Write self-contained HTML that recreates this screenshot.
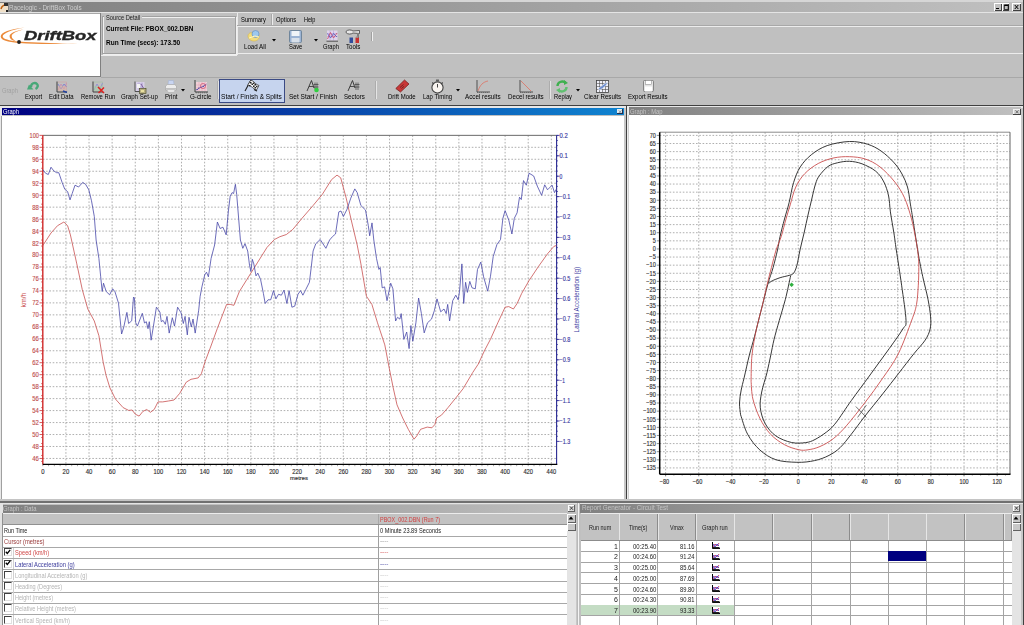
<!DOCTYPE html>
<html><head><meta charset="utf-8"><style>
html,body{margin:0;padding:0;}
body{width:1024px;height:625px;overflow:hidden;position:relative;background:#c0c0c0;font-family:"Liberation Sans", sans-serif;}
#wrap{filter:blur(0.35px);width:1024px;height:625px;position:relative;overflow:hidden;}
svg text{font-family:"Liberation Sans", sans-serif;}
</style></head><body><div id="wrap">
<div style="position:absolute;left:0px;top:0px;width:1024px;height:2px;background:#d6d6d6;"></div><div style="position:absolute;left:0px;top:2px;width:1023px;height:10px;background:linear-gradient(to right,#808080,#c0c0c0);"></div><div style="position:absolute;left:0px;top:12px;width:1023px;height:1px;background:#e4e4e4;"></div><div style="position:absolute;left:1023px;top:0px;width:1px;height:625px;background:#404040;"></div><svg style="position:absolute;left:0;top:3px" width="8" height="9" viewBox="0 0 8 9"><rect x="0" y="0" width="8" height="9" fill="#f0e0c8"/><path d="M1 6 Q2 2 6 2" stroke="#c06010" stroke-width="1.5" fill="none"/><rect x="4" y="0" width="4" height="3" fill="#303030"/><rect x="6" y="7" width="2" height="2" fill="#202020"/></svg><div style="position:absolute;left:994px;top:3px;width:7.5px;height:8px;background:#c0c0c0;box-shadow:inset 1px 1px #fff, inset -1px -1px #404040"></div><div style="position:absolute;left:1001.5px;top:3px;width:7.5px;height:8px;background:#c0c0c0;box-shadow:inset 1px 1px #fff, inset -1px -1px #404040"></div><div style="position:absolute;left:1012px;top:3px;width:8.5px;height:8px;background:#c0c0c0;box-shadow:inset 1px 1px #fff, inset -1px -1px #404040"></div><div style="position:absolute;left:996px;top:8px;width:3px;height:1.2px;background:#000"></div><svg style="position:absolute;left:1001.5px;top:3px" width="8" height="8"><path d="M2.3 2.2 H6.2 V6.6 H2.3 Z" fill="none" stroke="#000" stroke-width="0.8"/><path d="M2.3 2.3 H6.2" stroke="#000" stroke-width="1.4"/></svg><svg style="position:absolute;left:1012px;top:3px" width="9" height="8"><path d="M2.8 2 L6.3 6 M6.3 2 L2.8 6" stroke="#000" stroke-width="1"/></svg><div style="position:absolute;left:0px;top:13px;width:100px;height:1px;background:#a8a8a8;"></div><div style="position:absolute;left:0px;top:14px;width:100px;height:62px;background:#fff;"></div><div style="position:absolute;left:100px;top:13px;width:1px;height:64px;background:#808080;"></div><div style="position:absolute;left:0px;top:76px;width:101px;height:1px;background:#808080;"></div><svg style="position:absolute;left:0;top:14px" width="100" height="62" viewBox="0 14 100 62">
<path d="M24.5,27.5 C10,29 0.7,32.5 0.7,36.5 C0.7,40.2 8,42.2 18,42.9 L18,41.5 C9.5,40.7 2.7,38.9 2.7,36.5 C2.7,33.6 11,29.7 24.5,27.5 Z" fill="#eb8a3a"/>
<path d="M19,43 C40,44.4 62,44.1 78,43.1 C62,43.3 40,43.1 19,41.5 Z" fill="#eb8a3a"/>
<path d="M23.5,29.6 C15,31 9.6,33.5 9.6,36.2 C9.6,38.9 12.5,40.7 17.2,41.7 C14,40.3 11.7,38.6 11.7,36.2 C11.7,33.8 16,31.3 23.5,29.6 Z" fill="#eb8a3a"/>
<circle cx="19" cy="42" r="1.9" fill="#222"/>
</svg><div style="position:absolute;left:102px;top:16px;width:132px;height:36px;border:1px solid #a0a0a0;box-shadow:1px 1px #f0f0f0, inset 1px 1px #f0f0f0"></div><div style="position:absolute;left:104px;top:14px;width:38px;height:5px;background:#c0c0c0;"></div><div style="position:absolute;left:101px;top:55px;width:136px;height:1px;background:#ececec;"></div><div style="position:absolute;left:237px;top:13px;width:1px;height:42px;background:#eaeaea;"></div><div style="position:absolute;left:237px;top:26px;width:786px;height:1px;background:#ececec;"></div><div style="position:absolute;left:237px;top:25px;width:786px;height:1px;background:#a8a8a8;"></div><div style="position:absolute;left:271px;top:14px;width:1px;height:11px;background:#a8a8a8;"></div><div style="position:absolute;left:272px;top:14px;width:1px;height:11px;background:#ececec;"></div><div style="position:absolute;left:237px;top:53px;width:786px;height:1px;background:#ececec;"></div><div style="position:absolute;left:371px;top:32px;width:1px;height:9px;background:#a0a0a0;"></div><div style="position:absolute;left:372px;top:32px;width:1px;height:9px;background:#f0f0f0;"></div><svg style="position:absolute;left:271.8px;top:39px" width="5" height="3"><path d="M0 0 L4 0 L2 2.5 Z" fill="#000"/></svg><svg style="position:absolute;left:314.3px;top:39px" width="5" height="3"><path d="M0 0 L4 0 L2 2.5 Z" fill="#000"/></svg><svg style="position:absolute;left:247px;top:29px" width="14" height="14" viewBox="0 0 14 14">
<path d="M1 7 C1 4 4 3 7 4 L12 6 C13 9 11 12 7 12 C4 12 1 10 1 7Z" fill="#f2dc7c" stroke="#d9b84a" stroke-width="0.6"/>
<circle cx="8.5" cy="5" r="3.5" fill="#9cc8ee" stroke="#5a8ac0" stroke-width="0.6"/>
<path d="M2 9 L8 7 L12 8" stroke="#fff6c0" stroke-width="1" fill="none"/>
</svg><svg style="position:absolute;left:289px;top:30px" width="13" height="13" viewBox="0 0 13 13">
<rect x="0.5" y="0.5" width="12" height="12" rx="1" fill="#9cb4d4" stroke="#607890" stroke-width="0.8"/>
<rect x="2.5" y="1" width="8" height="5" fill="#f0f4f8"/>
<rect x="2.5" y="8" width="8" height="4.5" fill="#d8e0ea"/>
</svg><svg style="position:absolute;left:326px;top:30px" width="12" height="12" viewBox="0 0 12 12">
<rect x="1" y="0.5" width="10.5" height="10" fill="#e0d4ec"/>
<path d="M1 3.5 H11.5 M1 6.5 H11.5 M4 0.5 V10.5 M7.5 0.5 V10.5" stroke="#b0a0d8" stroke-width="0.6"/>
<path d="M1.5 9 L4.5 2.5 L7.5 8 L11 3" stroke="#d05070" stroke-width="0.9" fill="none"/>
<path d="M1.5 3.5 L4.5 8 L7.5 3.5 L11 7" stroke="#6060c0" stroke-width="0.9" fill="none"/>
<path d="M0.5 11.2 H12" stroke="#505050" stroke-width="1"/>
</svg><svg style="position:absolute;left:345px;top:29px" width="16" height="14" viewBox="0 0 16 14">
<path d="M1 2.5 C2.5 0.5 6 0.5 8 2 L14.5 1.5 L14.5 4.5 L8 4 C6 5.5 2.5 5.5 1 3.5 Z" fill="#e8e8e8" stroke="#404040" stroke-width="0.8"/>
<rect x="12" y="4" width="2" height="5" fill="#808080"/>
<rect x="4.5" y="8.5" width="3.5" height="5.5" fill="#304c9c"/>
<rect x="10.5" y="8.5" width="3.5" height="5.5" fill="#c83030"/>
<rect x="11.5" y="7" width="1.5" height="2" fill="#909090"/>
</svg><div style="position:absolute;left:101px;top:76.8px;width:922px;height:1px;background:#a8a8a8;"></div><div style="position:absolute;left:0px;top:105px;width:1024px;height:1px;background:#404040;"></div><div style="position:absolute;left:0px;top:106px;width:1023px;height:2px;background:#e8e8e8;"></div><div style="position:absolute;left:218.5px;top:78.5px;width:64.8px;height:22.2px;background:#c6d4ee;border:1px solid #3a4a84"></div><div style="position:absolute;left:216.6px;top:81px;width:1px;height:18px;background:#acacac;"></div><div style="position:absolute;left:217.6px;top:81px;width:1px;height:18px;background:#e4e4e4;"></div><div style="position:absolute;left:375.2px;top:81px;width:1px;height:18px;background:#acacac;"></div><div style="position:absolute;left:376.2px;top:81px;width:1px;height:18px;background:#e4e4e4;"></div><div style="position:absolute;left:548.9px;top:81px;width:1px;height:18px;background:#acacac;"></div><div style="position:absolute;left:549.9px;top:81px;width:1px;height:18px;background:#e4e4e4;"></div><svg style="position:absolute;left:181px;top:89.2px" width="5" height="3"><path d="M0 0 L4 0 L2 2.5 Z" fill="#000"/></svg><svg style="position:absolute;left:456px;top:88.5px" width="5" height="3"><path d="M0 0 L4 0 L2 2.5 Z" fill="#000"/></svg><svg style="position:absolute;left:575.6px;top:88.5px" width="5" height="3"><path d="M0 0 L4 0 L2 2.5 Z" fill="#000"/></svg><svg style="position:absolute;left:26px;top:81px" width="13" height="10" viewBox="0 0 13 10"><path d="M5 6 C5 2 9 1 11 3 C12.5 4.5 11.5 7 9.5 8" stroke="#48a878" stroke-width="2.4" fill="none"/><path d="M1 8.5 L7.5 8.5 L3 3.5 Z" fill="#48a878"/></svg><svg style="position:absolute;left:56px;top:81px" width="12" height="12" viewBox="0 0 12 12"><path d="M1.5 1 H10.5 V10.5" stroke="#d0a0a0" stroke-width="0.6" fill="none"/><path d="M2 9 L5 3 L8 8 L10.5 2" stroke="#c890b0" stroke-width="0.9" fill="none"/><path d="M2 3 L5 8 L8 3 L10.5 6" stroke="#8080d0" stroke-width="0.9" fill="none"/><rect x="2" y="5" width="8" height="5" fill="#e0b0a0" opacity="0.5"/><path d="M1 0.5 V11 H11" stroke="#404040" stroke-width="1" fill="none"/><path d="M7 10 L11 11.5" stroke="#2040a0" stroke-width="1.4"/></svg><svg style="position:absolute;left:92px;top:81px" width="13" height="13" viewBox="0 0 13 13"><path d="M1.5 1 H10.5 V10.5" stroke="#a0c0a0" stroke-width="0.6" fill="none"/><path d="M2 9 L5 3 L8 8 L10.5 2" stroke="#9090d0" stroke-width="0.9" fill="none"/><rect x="2" y="5" width="8" height="5" fill="#a0d0a0" opacity="0.5"/><path d="M1 0.5 V11 H11" stroke="#404040" stroke-width="1" fill="none"/><path d="M6 6 L12 12 M12 6.5 L6.5 12" stroke="#e02020" stroke-width="1.5"/></svg><svg style="position:absolute;left:134px;top:81px" width="13" height="13" viewBox="0 0 13 13"><rect x="1.5" y="1" width="9" height="9" fill="#d8d0e8"/><path d="M3 3 h6 M3 6 h6 M5 1.5 v8 M8 1.5 v8" stroke="#b0a0d0" stroke-width="0.7"/><path d="M1 0.5 V10.5 H6" stroke="#505050" stroke-width="1" fill="none"/><rect x="3" y="3" width="3" height="4" fill="#f4f4f4"/><path d="M7 3 L9.5 7" stroke="#8060a0" stroke-width="1"/><rect x="5.5" y="7.5" width="6.5" height="5" fill="#b8b080" stroke="#505030" stroke-width="0.7"/><rect x="7" y="9" width="3" height="2" fill="#e8e0a0"/></svg><svg style="position:absolute;left:165px;top:80px" width="12" height="13" viewBox="0 0 12 13"><path d="M3.5 0.5 L8.5 0.5 L9 5 L3 5 Z" fill="#c8d4f0" stroke="#a0b0d0" stroke-width="0.5"/><path d="M0.5 6 L2.5 4.5 H9.5 L11.5 6 V10 H0.5 Z" fill="#ececec" stroke="#a0a0a0" stroke-width="0.6"/><rect x="1" y="8" width="10" height="1.5" fill="#c0c0c0"/><path d="M2 10 H10 L9 12 H3 Z" fill="#f8f8f8" stroke="#b0b0b0" stroke-width="0.5"/></svg><svg style="position:absolute;left:194px;top:80px" width="14" height="14" viewBox="0 0 14 14"><rect x="2" y="2" width="11" height="9" fill="#f0d0d8"/><path d="M2 5 H13 M2 8 H13 M5 2 V11 M8 2 V11 M11 2 V11" stroke="#e0a0b0" stroke-width="0.5"/><path d="M1 0 V12 H14" stroke="#404040" stroke-width="1" fill="none"/><path d="M2.5 10 L5 8 L8 7 L10 6 L12.5 4" stroke="#3030a0" stroke-width="1.1" stroke-dasharray="1.5 0.8" fill="none"/><circle cx="9" cy="6" r="2.6" fill="none" stroke="#d04060" stroke-width="0.6"/><path d="M2 12.8 H13" stroke="#505050" stroke-width="0.6" stroke-dasharray="1 1"/></svg><svg style="position:absolute;left:244px;top:79px" width="16" height="13" viewBox="0 0 16 13"><path d="M1 12 L7 1" stroke="#202020" stroke-width="1.1"/><path d="M6.5 1.5 C8.5 1 10 3 11.5 4.5 C12.5 5.5 14 6 15 6.5 L12.5 11 C11 10.5 9.5 9.5 8.5 8.5 C7 7 5 6.5 3.5 6.5 Z" fill="#f4f4f4" stroke="#202020" stroke-width="0.7"/><path d="M6 3 h1.5 v1.5 h-1.5z M9 3.5 h1.5 v1.5 h-1.5z M7.5 4.5 h1.5 v1.5 h-1.5z M10.5 5 h1.5 v1.5 h-1.5z M5 6 h1.5 v1.2 h-1.5z M9 6.5 h1.5 v1.5 h-1.5z M12 6.8 h1.5 v1.5 h-1.5z M10.5 8 h1.5 v1.5 h-1.5z" fill="#202020"/><path d="M10 10.5 L13 12" stroke="#202020" stroke-width="1.2"/></svg><svg style="position:absolute;left:306px;top:79px" width="14" height="14" viewBox="0 0 14 14"><path d="M1 12 L5.5 1.5 L8 9" stroke="#303030" stroke-width="0.9" fill="none"/><path d="M3 7.5 H7" stroke="#303030" stroke-width="0.8"/><path d="M7.5 5.5 H12.5 M7.5 8 H12.5 M9 3.5 V10 M11 3.5 V10" stroke="#404040" stroke-width="0.7"/><circle cx="10.5" cy="11" r="2.3" fill="#30d040"/></svg><svg style="position:absolute;left:347px;top:79px" width="14" height="13" viewBox="0 0 14 13"><path d="M1 12 L5.5 1.5 L8 9" stroke="#303030" stroke-width="0.9" fill="none"/><path d="M3 7.5 H7" stroke="#303030" stroke-width="0.8"/><path d="M7.5 5.5 H12.5 M7.5 8 H12.5 M9 3.5 V11 M11 3.5 V11" stroke="#404040" stroke-width="0.7"/></svg><svg style="position:absolute;left:395px;top:79px" width="15" height="14" viewBox="0 0 15 14"><path d="M0.8 9.5 L9.5 1 L14 5 L5.5 13 Z" fill="#c83838" stroke="#701818" stroke-width="0.7"/><path d="M5 8.5 L8.5 5.5 M6.5 9.5 L9 7.3" stroke="#602020" stroke-width="0.8"/></svg><svg style="position:absolute;left:430px;top:79px" width="15" height="15" viewBox="0 0 15 15"><circle cx="7.5" cy="8.5" r="5.6" fill="#f8f4f0" stroke="#404040" stroke-width="1.1"/><rect x="6" y="0.5" width="3" height="2" fill="#606060"/><path d="M2.3 3.5 L3.8 5 M12.7 3.5 L11.2 5" stroke="#404040" stroke-width="1.1"/><path d="M7.5 8.5 L7.5 5" stroke="#303030" stroke-width="0.9"/></svg><svg style="position:absolute;left:476px;top:80px" width="14" height="13" viewBox="0 0 14 13"><path d="M1 0 V12 H14" stroke="#505050" stroke-width="1" fill="none"/><path d="M2 11 C4 5 7 2 12 1" stroke="#e07060" stroke-width="0.8" fill="none"/><path d="M1 12.5 H13" stroke="#505050" stroke-width="0.6" stroke-dasharray="1 1"/></svg><svg style="position:absolute;left:519px;top:80px" width="14" height="13" viewBox="0 0 14 13"><path d="M1 0 V12 H14" stroke="#505050" stroke-width="1" fill="none"/><path d="M2 1 L12 11" stroke="#e07060" stroke-width="0.8" fill="none"/><path d="M1 12.5 H13" stroke="#505050" stroke-width="0.6" stroke-dasharray="1 1"/></svg><svg style="position:absolute;left:555px;top:80px" width="14" height="13" viewBox="0 0 14 13"><path d="M2.5 6 C2.5 2 7 0.5 10.5 2.5" stroke="#40b050" stroke-width="2.4" fill="none"/><path d="M9 0 L13 3 L9 5 Z" fill="#40b050"/><path d="M11.5 7 C11.5 11 7 12.5 3.5 10.5" stroke="#60c070" stroke-width="2.4" fill="none"/><path d="M5 13 L1 10 L5 8 Z" fill="#60c070"/></svg><svg style="position:absolute;left:596px;top:80px" width="13" height="13" viewBox="0 0 13 13"><rect x="0.5" y="0.5" width="12" height="12" fill="#f0f0f8" stroke="#404040" stroke-width="0.8"/><path d="M0.5 3.5 H12.5 M0.5 6.5 H12.5 M0.5 9.5 H12.5 M3.5 0.5 V12.5 M6.5 0.5 V12.5 M9.5 0.5 V12.5" stroke="#505050" stroke-width="0.6"/><path d="M2 9 C5 6 9 3 12 2 C11 5 8 8 4 10 Z" fill="#7090d0" stroke="#fff" stroke-width="0.6"/></svg><svg style="position:absolute;left:643px;top:80px" width="11" height="12" viewBox="0 0 11 12"><rect x="0.5" y="0.5" width="10" height="11" rx="1" fill="#e4e4e4" stroke="#707070" stroke-width="0.8"/><rect x="2.5" y="0.5" width="6" height="4" fill="#ffffff" stroke="#808080" stroke-width="0.5"/><rect x="2" y="6.5" width="7" height="5" fill="#fff"/></svg><div style="position:absolute;left:0px;top:108px;width:2px;height:392px;background:#e8e8e8;"></div><div style="position:absolute;left:1px;top:116px;width:1px;height:384px;background:#a0a0a0;"></div><div style="position:absolute;left:2px;top:107.6px;width:622.5px;height:7.9px;background:linear-gradient(to right,#000080,#1084d0);"></div><div style="position:absolute;left:2px;top:115.5px;width:622px;height:384px;background:#fff;"></div><div style="position:absolute;left:624px;top:108px;width:2px;height:392px;background:#c8c8c8;"></div><div style="position:absolute;left:626px;top:106px;width:1px;height:397px;background:#404040;"></div><div style="position:absolute;left:627px;top:106px;width:1.5px;height:397px;background:#ececec;"></div><div style="position:absolute;left:617px;top:108.8px;width:6.2px;height:5.6px;background:#e4eef4;box-shadow:inset -1px -1px #203050"></div><svg style="position:absolute;left:617px;top:108.8px" width="7" height="6"><path d="M1.8 1.4 L4.4 4 M4.4 1.4 L1.8 4" stroke="#707070" stroke-width="0.7"/></svg><div style="position:absolute;left:628.5px;top:107.4px;width:392.5px;height:7.8px;background:linear-gradient(to right,#808080,#c0c0c0);"></div><div style="position:absolute;left:628.5px;top:115px;width:392.5px;height:384.5px;background:#fff;"></div><div style="position:absolute;left:628px;top:115px;width:1px;height:384.5px;background:#d0d0d0;"></div><div style="position:absolute;left:1021px;top:108px;width:2px;height:392px;background:#c8c8c8;"></div><div style="position:absolute;left:1013px;top:109px;width:7.8px;height:5.6px;background:#d4d4d4;box-shadow:inset -1px -1px #404040, inset 1px 1px #f0f0f0"></div><svg style="position:absolute;left:1013px;top:109px" width="8" height="6"><path d="M2.5 1.3 L5.5 4.3 M5.5 1.3 L2.5 4.3" stroke="#505050" stroke-width="0.8"/></svg><div style="position:absolute;left:0px;top:499px;width:1023px;height:2px;background:#c4c4c4;"></div><div style="position:absolute;left:0px;top:501px;width:1023px;height:1.5px;background:#707070;"></div><div style="position:absolute;left:0px;top:502.5px;width:1023px;height:1.5px;background:#e4e4e4;"></div><div style="position:absolute;left:0px;top:504px;width:2.5px;height:121px;background:#e4e4e4;"></div><div style="position:absolute;left:2.2px;top:512.5px;width:0.8px;height:112.5px;background:#909090;"></div><div style="position:absolute;left:2.5px;top:504.5px;width:573.5px;height:8px;background:linear-gradient(to right,#808080,#c0c0c0);"></div><div style="position:absolute;left:568px;top:505px;width:7px;height:6.5px;background:#d8d8d8;box-shadow:inset -1px -1px #606060, inset 1px 1px #fff"></div><svg style="position:absolute;left:568px;top:505px" width="7" height="7"><path d="M2 1.5 L5 4.8 M5 1.5 L2 4.8" stroke="#303030" stroke-width="0.9"/></svg><div style="position:absolute;left:2.5px;top:512.5px;width:573.5px;height:112.5px;background:#c0c0c0;"></div><div style="position:absolute;left:3px;top:514px;width:563.5px;height:10.4px;background:#c2c2c2;"></div><div style="position:absolute;left:3px;top:513.3px;width:563.5px;height:1px;background:#ececec;"></div><div style="position:absolute;left:3px;top:524.4px;width:563.5px;height:0.8px;background:#909090;"></div><div style="position:absolute;left:3px;top:525px;width:563.5px;height:100px;background:#fff;"></div><div style="position:absolute;left:3px;top:536px;width:563.5px;height:1px;background:#a8a8a8;"></div><div style="position:absolute;left:3px;top:547px;width:563.5px;height:1px;background:#a8a8a8;"></div><div style="position:absolute;left:3px;top:558px;width:563.5px;height:1px;background:#a8a8a8;"></div><div style="position:absolute;left:3px;top:569px;width:563.5px;height:1px;background:#a8a8a8;"></div><div style="position:absolute;left:3px;top:581px;width:563.5px;height:1px;background:#a8a8a8;"></div><div style="position:absolute;left:3px;top:592px;width:563.5px;height:1px;background:#a8a8a8;"></div><div style="position:absolute;left:3px;top:603px;width:563.5px;height:1px;background:#a8a8a8;"></div><div style="position:absolute;left:3px;top:614px;width:563.5px;height:1px;background:#a8a8a8;"></div><div style="position:absolute;left:3px;top:625px;width:563.5px;height:1px;background:#a8a8a8;"></div><div style="position:absolute;left:3.9px;top:548.4px;width:6px;height:6px;background:#fff;border-left:1px solid #404040;border-top:1px solid #404040;border-right:1px solid #e0e0e0;border-bottom:1px solid #e0e0e0"></div><svg style="position:absolute;left:4.5px;top:549.1px" width="6" height="6"><path d="M0.8 2.8 L2.3 4.5 L5.2 0.8" stroke="#000" stroke-width="1.3" fill="none"/></svg><div style="position:absolute;left:13px;top:547.6px;width:0.8px;height:10.4px;background:#d0d0d0;"></div><div style="position:absolute;left:3.9px;top:559.6px;width:6px;height:6px;background:#fff;border-left:1px solid #404040;border-top:1px solid #404040;border-right:1px solid #e0e0e0;border-bottom:1px solid #e0e0e0"></div><svg style="position:absolute;left:4.5px;top:560.3px" width="6" height="6"><path d="M0.8 2.8 L2.3 4.5 L5.2 0.8" stroke="#000" stroke-width="1.3" fill="none"/></svg><div style="position:absolute;left:13px;top:558.8000000000001px;width:0.8px;height:10.4px;background:#d0d0d0;"></div><div style="position:absolute;left:3.9px;top:570.8px;width:6px;height:6px;background:#fff;border-left:1px solid #404040;border-top:1px solid #404040;border-right:1px solid #e0e0e0;border-bottom:1px solid #e0e0e0"></div><div style="position:absolute;left:13px;top:570.0px;width:0.8px;height:10.4px;background:#d0d0d0;"></div><div style="position:absolute;left:3.9px;top:582.0px;width:6px;height:6px;background:#fff;border-left:1px solid #404040;border-top:1px solid #404040;border-right:1px solid #e0e0e0;border-bottom:1px solid #e0e0e0"></div><div style="position:absolute;left:13px;top:581.2px;width:0.8px;height:10.4px;background:#d0d0d0;"></div><div style="position:absolute;left:3.9px;top:593.2px;width:6px;height:6px;background:#fff;border-left:1px solid #404040;border-top:1px solid #404040;border-right:1px solid #e0e0e0;border-bottom:1px solid #e0e0e0"></div><div style="position:absolute;left:13px;top:592.4000000000001px;width:0.8px;height:10.4px;background:#d0d0d0;"></div><div style="position:absolute;left:3.9px;top:604.4px;width:6px;height:6px;background:#fff;border-left:1px solid #404040;border-top:1px solid #404040;border-right:1px solid #e0e0e0;border-bottom:1px solid #e0e0e0"></div><div style="position:absolute;left:13px;top:603.6px;width:0.8px;height:10.4px;background:#d0d0d0;"></div><div style="position:absolute;left:3.9px;top:615.6px;width:6px;height:6px;background:#fff;border-left:1px solid #404040;border-top:1px solid #404040;border-right:1px solid #e0e0e0;border-bottom:1px solid #e0e0e0"></div><div style="position:absolute;left:13px;top:614.8000000000001px;width:0.8px;height:10.4px;background:#d0d0d0;"></div><div style="position:absolute;left:378px;top:525.2px;width:0.8px;height:100px;background:#a0a0a0;"></div><div style="position:absolute;left:378px;top:514px;width:0.8px;height:10.4px;background:#a8a8a8;"></div><div style="position:absolute;left:566.5px;top:514px;width:9px;height:111px;background:#e4e4e4;"></div><div style="position:absolute;left:566.5px;top:514px;width:9px;height:8.6px;background:#c8c8c8;box-shadow:inset 1px 1px #fff, inset -1px -1px #606060"></div><svg style="position:absolute;left:568px;top:516px" width="6" height="4"><path d="M0.5 3.5 L3 0.5 L5.5 3.5 Z" fill="#000"/></svg><div style="position:absolute;left:566.5px;top:522.6px;width:9px;height:8px;background:#c8c8c8;box-shadow:inset 1px 1px #fff, inset -1px -1px #606060"></div><div style="position:absolute;left:575.5px;top:504px;width:1.5px;height:121px;background:#c8c8c8;"></div><div style="position:absolute;left:577px;top:503px;width:1px;height:122px;background:#b8b8b8;"></div><div style="position:absolute;left:578px;top:503px;width:1px;height:122px;background:#f4f4f4;"></div><div style="position:absolute;left:579px;top:503px;width:1px;height:122px;background:#c0c0c0;"></div><div style="position:absolute;left:580px;top:504px;width:441px;height:8.5px;background:linear-gradient(to right,#808080,#c0c0c0);"></div><div style="position:absolute;left:580px;top:512.5px;width:441px;height:112.5px;background:#c0c0c0;"></div><div style="position:absolute;left:580.5px;top:514px;width:431.2px;height:25.8px;background:#c2c2c2;"></div><div style="position:absolute;left:580.5px;top:513.3px;width:431.2px;height:1px;background:#ececec;"></div><div style="position:absolute;left:618.6px;top:514px;width:0.8px;height:25.8px;background:#8c8c8c;"></div><div style="position:absolute;left:619.4px;top:514px;width:0.8px;height:25.8px;background:#e6e6e6;"></div><div style="position:absolute;left:656.9000000000001px;top:514px;width:0.8px;height:25.8px;background:#8c8c8c;"></div><div style="position:absolute;left:657.7px;top:514px;width:0.8px;height:25.8px;background:#e6e6e6;"></div><div style="position:absolute;left:695.2px;top:514px;width:0.8px;height:25.8px;background:#8c8c8c;"></div><div style="position:absolute;left:696.0px;top:514px;width:0.8px;height:25.8px;background:#e6e6e6;"></div><div style="position:absolute;left:733.5px;top:514px;width:0.8px;height:25.8px;background:#8c8c8c;"></div><div style="position:absolute;left:734.3px;top:514px;width:0.8px;height:25.8px;background:#e6e6e6;"></div><div style="position:absolute;left:771.7px;top:514px;width:0.8px;height:25.8px;background:#8c8c8c;"></div><div style="position:absolute;left:772.5px;top:514px;width:0.8px;height:25.8px;background:#e6e6e6;"></div><div style="position:absolute;left:810.9000000000001px;top:514px;width:0.8px;height:25.8px;background:#8c8c8c;"></div><div style="position:absolute;left:811.7px;top:514px;width:0.8px;height:25.8px;background:#e6e6e6;"></div><div style="position:absolute;left:849.1px;top:514px;width:0.8px;height:25.8px;background:#8c8c8c;"></div><div style="position:absolute;left:849.9px;top:514px;width:0.8px;height:25.8px;background:#e6e6e6;"></div><div style="position:absolute;left:887.5px;top:514px;width:0.8px;height:25.8px;background:#8c8c8c;"></div><div style="position:absolute;left:888.3px;top:514px;width:0.8px;height:25.8px;background:#e6e6e6;"></div><div style="position:absolute;left:925.6px;top:514px;width:0.8px;height:25.8px;background:#8c8c8c;"></div><div style="position:absolute;left:926.4px;top:514px;width:0.8px;height:25.8px;background:#e6e6e6;"></div><div style="position:absolute;left:964.0px;top:514px;width:0.8px;height:25.8px;background:#8c8c8c;"></div><div style="position:absolute;left:964.8px;top:514px;width:0.8px;height:25.8px;background:#e6e6e6;"></div><div style="position:absolute;left:1002.9000000000001px;top:514px;width:0.8px;height:25.8px;background:#8c8c8c;"></div><div style="position:absolute;left:1003.7px;top:514px;width:0.8px;height:25.8px;background:#e6e6e6;"></div><div style="position:absolute;left:1010.9000000000001px;top:514px;width:0.8px;height:25.8px;background:#8c8c8c;"></div><div style="position:absolute;left:1011.7px;top:514px;width:0.8px;height:25.8px;background:#e6e6e6;"></div><div style="position:absolute;left:580.5px;top:539.8px;width:431.2px;height:0.8px;background:#8c8c8c;"></div><div style="position:absolute;left:580.5px;top:540.6px;width:431.2px;height:85px;background:#fff;"></div><div style="position:absolute;left:580.5px;top:551px;width:431.2px;height:1px;background:#a4a4a4;"></div><div style="position:absolute;left:580.5px;top:562px;width:431.2px;height:1px;background:#a4a4a4;"></div><div style="position:absolute;left:580.5px;top:572px;width:431.2px;height:1px;background:#a4a4a4;"></div><div style="position:absolute;left:580.5px;top:583px;width:431.2px;height:1px;background:#a4a4a4;"></div><div style="position:absolute;left:580.5px;top:594px;width:431.2px;height:1px;background:#a4a4a4;"></div><div style="position:absolute;left:580.5px;top:605px;width:431.2px;height:1px;background:#a4a4a4;"></div><div style="position:absolute;left:580.5px;top:615px;width:431.2px;height:1px;background:#a4a4a4;"></div><div style="position:absolute;left:580.5px;top:626px;width:431.2px;height:1px;background:#a4a4a4;"></div><svg style="position:absolute;left:712px;top:542.1px" width="8" height="7" viewBox="0 0 8 7"><rect x="0" y="0" width="8" height="7" fill="#fff"/><path d="M0.5 0 V6.5 H8" stroke="#000" stroke-width="1" fill="none"/><path d="M1 5 L3 2 L5 4 L7 1" stroke="#c03070" stroke-width="0.9" fill="none"/><path d="M1 2 L3 5 L5 2 L7 4" stroke="#4040c0" stroke-width="0.9" fill="none"/><rect x="0.5" y="5" width="7" height="1.5" fill="#202020"/></svg><svg style="position:absolute;left:712px;top:552.85px" width="8" height="7" viewBox="0 0 8 7"><rect x="0" y="0" width="8" height="7" fill="#fff"/><path d="M0.5 0 V6.5 H8" stroke="#000" stroke-width="1" fill="none"/><path d="M1 5 L3 2 L5 4 L7 1" stroke="#c03070" stroke-width="0.9" fill="none"/><path d="M1 2 L3 5 L5 2 L7 4" stroke="#4040c0" stroke-width="0.9" fill="none"/><rect x="0.5" y="5" width="7" height="1.5" fill="#202020"/></svg><svg style="position:absolute;left:712px;top:563.6px" width="8" height="7" viewBox="0 0 8 7"><rect x="0" y="0" width="8" height="7" fill="#fff"/><path d="M0.5 0 V6.5 H8" stroke="#000" stroke-width="1" fill="none"/><path d="M1 5 L3 2 L5 4 L7 1" stroke="#c03070" stroke-width="0.9" fill="none"/><path d="M1 2 L3 5 L5 2 L7 4" stroke="#4040c0" stroke-width="0.9" fill="none"/><rect x="0.5" y="5" width="7" height="1.5" fill="#202020"/></svg><svg style="position:absolute;left:712px;top:574.35px" width="8" height="7" viewBox="0 0 8 7"><rect x="0" y="0" width="8" height="7" fill="#fff"/><path d="M0.5 0 V6.5 H8" stroke="#000" stroke-width="1" fill="none"/><path d="M1 5 L3 2 L5 4 L7 1" stroke="#c03070" stroke-width="0.9" fill="none"/><path d="M1 2 L3 5 L5 2 L7 4" stroke="#4040c0" stroke-width="0.9" fill="none"/><rect x="0.5" y="5" width="7" height="1.5" fill="#202020"/></svg><svg style="position:absolute;left:712px;top:585.1px" width="8" height="7" viewBox="0 0 8 7"><rect x="0" y="0" width="8" height="7" fill="#fff"/><path d="M0.5 0 V6.5 H8" stroke="#000" stroke-width="1" fill="none"/><path d="M1 5 L3 2 L5 4 L7 1" stroke="#c03070" stroke-width="0.9" fill="none"/><path d="M1 2 L3 5 L5 2 L7 4" stroke="#4040c0" stroke-width="0.9" fill="none"/><rect x="0.5" y="5" width="7" height="1.5" fill="#202020"/></svg><svg style="position:absolute;left:712px;top:595.85px" width="8" height="7" viewBox="0 0 8 7"><rect x="0" y="0" width="8" height="7" fill="#fff"/><path d="M0.5 0 V6.5 H8" stroke="#000" stroke-width="1" fill="none"/><path d="M1 5 L3 2 L5 4 L7 1" stroke="#c03070" stroke-width="0.9" fill="none"/><path d="M1 2 L3 5 L5 2 L7 4" stroke="#4040c0" stroke-width="0.9" fill="none"/><rect x="0.5" y="5" width="7" height="1.5" fill="#202020"/></svg><div style="position:absolute;left:580.5px;top:605.1px;width:153.8px;height:10.2px;background:#c4dcc4;"></div><svg style="position:absolute;left:712px;top:606.6px" width="8" height="7" viewBox="0 0 8 7"><rect x="0" y="0" width="8" height="7" fill="#fff"/><path d="M0.5 0 V6.5 H8" stroke="#000" stroke-width="1" fill="none"/><path d="M1 5 L3 2 L5 4 L7 1" stroke="#c03070" stroke-width="0.9" fill="none"/><path d="M1 2 L3 5 L5 2 L7 4" stroke="#4040c0" stroke-width="0.9" fill="none"/><rect x="0.5" y="5" width="7" height="1.5" fill="#202020"/></svg><div style="position:absolute;left:619.0px;top:540.6px;width:0.8px;height:85px;background:#a4a4a4;"></div><div style="position:absolute;left:657.3000000000001px;top:540.6px;width:0.8px;height:85px;background:#a4a4a4;"></div><div style="position:absolute;left:695.6px;top:540.6px;width:0.8px;height:85px;background:#a4a4a4;"></div><div style="position:absolute;left:733.9px;top:540.6px;width:0.8px;height:85px;background:#a4a4a4;"></div><div style="position:absolute;left:772.1px;top:540.6px;width:0.8px;height:85px;background:#a4a4a4;"></div><div style="position:absolute;left:811.3000000000001px;top:540.6px;width:0.8px;height:85px;background:#a4a4a4;"></div><div style="position:absolute;left:849.5px;top:540.6px;width:0.8px;height:85px;background:#a4a4a4;"></div><div style="position:absolute;left:887.9px;top:540.6px;width:0.8px;height:85px;background:#a4a4a4;"></div><div style="position:absolute;left:926.0px;top:540.6px;width:0.8px;height:85px;background:#a4a4a4;"></div><div style="position:absolute;left:964.4px;top:540.6px;width:0.8px;height:85px;background:#a4a4a4;"></div><div style="position:absolute;left:1003.3000000000001px;top:540.6px;width:0.8px;height:85px;background:#a4a4a4;"></div><div style="position:absolute;left:888.3px;top:551.35px;width:38.1px;height:10px;background:#000080;"></div><div style="position:absolute;left:1011.7px;top:514px;width:9.1px;height:111px;background:#e4e4e4;"></div><div style="position:absolute;left:1011.7px;top:514px;width:9px;height:8.6px;background:#c8c8c8;box-shadow:inset 1px 1px #fff, inset -1px -1px #606060"></div><svg style="position:absolute;left:1013.2px;top:516px" width="6" height="4"><path d="M0.5 3.5 L3 0.5 L5.5 3.5 Z" fill="#000"/></svg><div style="position:absolute;left:1011.7px;top:522.6px;width:9px;height:8px;background:#c8c8c8;box-shadow:inset 1px 1px #fff, inset -1px -1px #606060"></div><div style="position:absolute;left:1013px;top:505px;width:7px;height:6.5px;background:#d8d8d8;box-shadow:inset -1px -1px #606060, inset 1px 1px #fff"></div><svg style="position:absolute;left:1013px;top:505px" width="7" height="7"><path d="M2 1.5 L5 4.8 M5 1.5 L2 4.8" stroke="#303030" stroke-width="0.9"/></svg><div style="position:absolute;left:1021px;top:504px;width:2px;height:121px;background:#c8c8c8;"></div><svg style="position:absolute;left:0;top:0;font-family:'Liberation Sans',sans-serif" width="1024" height="625" viewBox="0 0 1024 625"><rect x="42.8" y="135.35" width="513.8000000000001" height="329.04999999999995" fill="#fff"/><line x1="65.91" y1="135.35" x2="65.91" y2="464.4" stroke="#9a9a9a" stroke-width="0.8" stroke-dasharray="1.6 1.7"/><line x1="89.03" y1="135.35" x2="89.03" y2="464.4" stroke="#9a9a9a" stroke-width="0.8" stroke-dasharray="1.6 1.7"/><line x1="112.14" y1="135.35" x2="112.14" y2="464.4" stroke="#9a9a9a" stroke-width="0.8" stroke-dasharray="1.6 1.7"/><line x1="135.26" y1="135.35" x2="135.26" y2="464.4" stroke="#9a9a9a" stroke-width="0.8" stroke-dasharray="1.6 1.7"/><line x1="158.38" y1="135.35" x2="158.38" y2="464.4" stroke="#9a9a9a" stroke-width="0.8" stroke-dasharray="1.6 1.7"/><line x1="181.49" y1="135.35" x2="181.49" y2="464.4" stroke="#9a9a9a" stroke-width="0.8" stroke-dasharray="1.6 1.7"/><line x1="204.60" y1="135.35" x2="204.60" y2="464.4" stroke="#9a9a9a" stroke-width="0.8" stroke-dasharray="1.6 1.7"/><line x1="227.72" y1="135.35" x2="227.72" y2="464.4" stroke="#9a9a9a" stroke-width="0.8" stroke-dasharray="1.6 1.7"/><line x1="250.83" y1="135.35" x2="250.83" y2="464.4" stroke="#9a9a9a" stroke-width="0.8" stroke-dasharray="1.6 1.7"/><line x1="273.95" y1="135.35" x2="273.95" y2="464.4" stroke="#9a9a9a" stroke-width="0.8" stroke-dasharray="1.6 1.7"/><line x1="297.06" y1="135.35" x2="297.06" y2="464.4" stroke="#9a9a9a" stroke-width="0.8" stroke-dasharray="1.6 1.7"/><line x1="320.18" y1="135.35" x2="320.18" y2="464.4" stroke="#9a9a9a" stroke-width="0.8" stroke-dasharray="1.6 1.7"/><line x1="343.30" y1="135.35" x2="343.30" y2="464.4" stroke="#9a9a9a" stroke-width="0.8" stroke-dasharray="1.6 1.7"/><line x1="366.41" y1="135.35" x2="366.41" y2="464.4" stroke="#9a9a9a" stroke-width="0.8" stroke-dasharray="1.6 1.7"/><line x1="389.52" y1="135.35" x2="389.52" y2="464.4" stroke="#9a9a9a" stroke-width="0.8" stroke-dasharray="1.6 1.7"/><line x1="412.64" y1="135.35" x2="412.64" y2="464.4" stroke="#9a9a9a" stroke-width="0.8" stroke-dasharray="1.6 1.7"/><line x1="435.75" y1="135.35" x2="435.75" y2="464.4" stroke="#9a9a9a" stroke-width="0.8" stroke-dasharray="1.6 1.7"/><line x1="458.87" y1="135.35" x2="458.87" y2="464.4" stroke="#9a9a9a" stroke-width="0.8" stroke-dasharray="1.6 1.7"/><line x1="481.98" y1="135.35" x2="481.98" y2="464.4" stroke="#9a9a9a" stroke-width="0.8" stroke-dasharray="1.6 1.7"/><line x1="505.10" y1="135.35" x2="505.10" y2="464.4" stroke="#9a9a9a" stroke-width="0.8" stroke-dasharray="1.6 1.7"/><line x1="528.21" y1="135.35" x2="528.21" y2="464.4" stroke="#9a9a9a" stroke-width="0.8" stroke-dasharray="1.6 1.7"/><line x1="551.33" y1="135.35" x2="551.33" y2="464.4" stroke="#9a9a9a" stroke-width="0.8" stroke-dasharray="1.6 1.7"/><line x1="42.8" y1="147.32" x2="556.6" y2="147.32" stroke="#9a9a9a" stroke-width="0.8" stroke-dasharray="1.6 1.7"/><line x1="42.8" y1="159.28" x2="556.6" y2="159.28" stroke="#9a9a9a" stroke-width="0.8" stroke-dasharray="1.6 1.7"/><line x1="42.8" y1="171.25" x2="556.6" y2="171.25" stroke="#9a9a9a" stroke-width="0.8" stroke-dasharray="1.6 1.7"/><line x1="42.8" y1="183.22" x2="556.6" y2="183.22" stroke="#9a9a9a" stroke-width="0.8" stroke-dasharray="1.6 1.7"/><line x1="42.8" y1="195.19" x2="556.6" y2="195.19" stroke="#9a9a9a" stroke-width="0.8" stroke-dasharray="1.6 1.7"/><line x1="42.8" y1="207.15" x2="556.6" y2="207.15" stroke="#9a9a9a" stroke-width="0.8" stroke-dasharray="1.6 1.7"/><line x1="42.8" y1="219.12" x2="556.6" y2="219.12" stroke="#9a9a9a" stroke-width="0.8" stroke-dasharray="1.6 1.7"/><line x1="42.8" y1="231.09" x2="556.6" y2="231.09" stroke="#9a9a9a" stroke-width="0.8" stroke-dasharray="1.6 1.7"/><line x1="42.8" y1="243.05" x2="556.6" y2="243.05" stroke="#9a9a9a" stroke-width="0.8" stroke-dasharray="1.6 1.7"/><line x1="42.8" y1="255.02" x2="556.6" y2="255.02" stroke="#9a9a9a" stroke-width="0.8" stroke-dasharray="1.6 1.7"/><line x1="42.8" y1="266.99" x2="556.6" y2="266.99" stroke="#9a9a9a" stroke-width="0.8" stroke-dasharray="1.6 1.7"/><line x1="42.8" y1="278.95" x2="556.6" y2="278.95" stroke="#9a9a9a" stroke-width="0.8" stroke-dasharray="1.6 1.7"/><line x1="42.8" y1="290.92" x2="556.6" y2="290.92" stroke="#9a9a9a" stroke-width="0.8" stroke-dasharray="1.6 1.7"/><line x1="42.8" y1="302.89" x2="556.6" y2="302.89" stroke="#9a9a9a" stroke-width="0.8" stroke-dasharray="1.6 1.7"/><line x1="42.8" y1="314.86" x2="556.6" y2="314.86" stroke="#9a9a9a" stroke-width="0.8" stroke-dasharray="1.6 1.7"/><line x1="42.8" y1="326.82" x2="556.6" y2="326.82" stroke="#9a9a9a" stroke-width="0.8" stroke-dasharray="1.6 1.7"/><line x1="42.8" y1="338.79" x2="556.6" y2="338.79" stroke="#9a9a9a" stroke-width="0.8" stroke-dasharray="1.6 1.7"/><line x1="42.8" y1="350.76" x2="556.6" y2="350.76" stroke="#9a9a9a" stroke-width="0.8" stroke-dasharray="1.6 1.7"/><line x1="42.8" y1="362.72" x2="556.6" y2="362.72" stroke="#9a9a9a" stroke-width="0.8" stroke-dasharray="1.6 1.7"/><line x1="42.8" y1="374.69" x2="556.6" y2="374.69" stroke="#9a9a9a" stroke-width="0.8" stroke-dasharray="1.6 1.7"/><line x1="42.8" y1="386.66" x2="556.6" y2="386.66" stroke="#9a9a9a" stroke-width="0.8" stroke-dasharray="1.6 1.7"/><line x1="42.8" y1="398.62" x2="556.6" y2="398.62" stroke="#9a9a9a" stroke-width="0.8" stroke-dasharray="1.6 1.7"/><line x1="42.8" y1="410.59" x2="556.6" y2="410.59" stroke="#9a9a9a" stroke-width="0.8" stroke-dasharray="1.6 1.7"/><line x1="42.8" y1="422.56" x2="556.6" y2="422.56" stroke="#9a9a9a" stroke-width="0.8" stroke-dasharray="1.6 1.7"/><line x1="42.8" y1="434.52" x2="556.6" y2="434.52" stroke="#9a9a9a" stroke-width="0.8" stroke-dasharray="1.6 1.7"/><line x1="42.8" y1="446.49" x2="556.6" y2="446.49" stroke="#9a9a9a" stroke-width="0.8" stroke-dasharray="1.6 1.7"/><line x1="42.8" y1="458.46" x2="556.6" y2="458.46" stroke="#9a9a9a" stroke-width="0.8" stroke-dasharray="1.6 1.7"/><line x1="42.8" y1="135.35" x2="556.6" y2="135.35" stroke="#6a6a6a" stroke-width="1"/><line x1="39.5" y1="135.35" x2="42.8" y2="135.35" stroke="#d04848" stroke-width="0.9"/><line x1="39.5" y1="147.32" x2="42.8" y2="147.32" stroke="#d04848" stroke-width="0.9"/><line x1="39.5" y1="159.28" x2="42.8" y2="159.28" stroke="#d04848" stroke-width="0.9"/><line x1="39.5" y1="171.25" x2="42.8" y2="171.25" stroke="#d04848" stroke-width="0.9"/><line x1="39.5" y1="183.22" x2="42.8" y2="183.22" stroke="#d04848" stroke-width="0.9"/><line x1="39.5" y1="195.19" x2="42.8" y2="195.19" stroke="#d04848" stroke-width="0.9"/><line x1="39.5" y1="207.15" x2="42.8" y2="207.15" stroke="#d04848" stroke-width="0.9"/><line x1="39.5" y1="219.12" x2="42.8" y2="219.12" stroke="#d04848" stroke-width="0.9"/><line x1="39.5" y1="231.09" x2="42.8" y2="231.09" stroke="#d04848" stroke-width="0.9"/><line x1="39.5" y1="243.05" x2="42.8" y2="243.05" stroke="#d04848" stroke-width="0.9"/><line x1="39.5" y1="255.02" x2="42.8" y2="255.02" stroke="#d04848" stroke-width="0.9"/><line x1="39.5" y1="266.99" x2="42.8" y2="266.99" stroke="#d04848" stroke-width="0.9"/><line x1="39.5" y1="278.95" x2="42.8" y2="278.95" stroke="#d04848" stroke-width="0.9"/><line x1="39.5" y1="290.92" x2="42.8" y2="290.92" stroke="#d04848" stroke-width="0.9"/><line x1="39.5" y1="302.89" x2="42.8" y2="302.89" stroke="#d04848" stroke-width="0.9"/><line x1="39.5" y1="314.86" x2="42.8" y2="314.86" stroke="#d04848" stroke-width="0.9"/><line x1="39.5" y1="326.82" x2="42.8" y2="326.82" stroke="#d04848" stroke-width="0.9"/><line x1="39.5" y1="338.79" x2="42.8" y2="338.79" stroke="#d04848" stroke-width="0.9"/><line x1="39.5" y1="350.76" x2="42.8" y2="350.76" stroke="#d04848" stroke-width="0.9"/><line x1="39.5" y1="362.72" x2="42.8" y2="362.72" stroke="#d04848" stroke-width="0.9"/><line x1="39.5" y1="374.69" x2="42.8" y2="374.69" stroke="#d04848" stroke-width="0.9"/><line x1="39.5" y1="386.66" x2="42.8" y2="386.66" stroke="#d04848" stroke-width="0.9"/><line x1="39.5" y1="398.62" x2="42.8" y2="398.62" stroke="#d04848" stroke-width="0.9"/><line x1="39.5" y1="410.59" x2="42.8" y2="410.59" stroke="#d04848" stroke-width="0.9"/><line x1="39.5" y1="422.56" x2="42.8" y2="422.56" stroke="#d04848" stroke-width="0.9"/><line x1="39.5" y1="434.52" x2="42.8" y2="434.52" stroke="#d04848" stroke-width="0.9"/><line x1="39.5" y1="446.49" x2="42.8" y2="446.49" stroke="#d04848" stroke-width="0.9"/><line x1="39.5" y1="458.46" x2="42.8" y2="458.46" stroke="#d04848" stroke-width="0.9"/><line x1="41" y1="138.34" x2="42.8" y2="138.34" stroke="#d04848" stroke-width="0.7"/><line x1="41" y1="144.33" x2="42.8" y2="144.33" stroke="#d04848" stroke-width="0.7"/><line x1="41" y1="150.31" x2="42.8" y2="150.31" stroke="#d04848" stroke-width="0.7"/><line x1="41" y1="156.29" x2="42.8" y2="156.29" stroke="#d04848" stroke-width="0.7"/><line x1="41" y1="162.28" x2="42.8" y2="162.28" stroke="#d04848" stroke-width="0.7"/><line x1="41" y1="168.26" x2="42.8" y2="168.26" stroke="#d04848" stroke-width="0.7"/><line x1="41" y1="174.24" x2="42.8" y2="174.24" stroke="#d04848" stroke-width="0.7"/><line x1="41" y1="180.23" x2="42.8" y2="180.23" stroke="#d04848" stroke-width="0.7"/><line x1="41" y1="186.21" x2="42.8" y2="186.21" stroke="#d04848" stroke-width="0.7"/><line x1="41" y1="192.19" x2="42.8" y2="192.19" stroke="#d04848" stroke-width="0.7"/><line x1="41" y1="198.18" x2="42.8" y2="198.18" stroke="#d04848" stroke-width="0.7"/><line x1="41" y1="204.16" x2="42.8" y2="204.16" stroke="#d04848" stroke-width="0.7"/><line x1="41" y1="210.14" x2="42.8" y2="210.14" stroke="#d04848" stroke-width="0.7"/><line x1="41" y1="216.13" x2="42.8" y2="216.13" stroke="#d04848" stroke-width="0.7"/><line x1="41" y1="222.11" x2="42.8" y2="222.11" stroke="#d04848" stroke-width="0.7"/><line x1="41" y1="228.09" x2="42.8" y2="228.09" stroke="#d04848" stroke-width="0.7"/><line x1="41" y1="234.08" x2="42.8" y2="234.08" stroke="#d04848" stroke-width="0.7"/><line x1="41" y1="240.06" x2="42.8" y2="240.06" stroke="#d04848" stroke-width="0.7"/><line x1="41" y1="246.04" x2="42.8" y2="246.04" stroke="#d04848" stroke-width="0.7"/><line x1="41" y1="252.03" x2="42.8" y2="252.03" stroke="#d04848" stroke-width="0.7"/><line x1="41" y1="258.01" x2="42.8" y2="258.01" stroke="#d04848" stroke-width="0.7"/><line x1="41" y1="264.00" x2="42.8" y2="264.00" stroke="#d04848" stroke-width="0.7"/><line x1="41" y1="269.98" x2="42.8" y2="269.98" stroke="#d04848" stroke-width="0.7"/><line x1="41" y1="275.96" x2="42.8" y2="275.96" stroke="#d04848" stroke-width="0.7"/><line x1="41" y1="281.95" x2="42.8" y2="281.95" stroke="#d04848" stroke-width="0.7"/><line x1="41" y1="287.93" x2="42.8" y2="287.93" stroke="#d04848" stroke-width="0.7"/><line x1="41" y1="293.91" x2="42.8" y2="293.91" stroke="#d04848" stroke-width="0.7"/><line x1="41" y1="299.90" x2="42.8" y2="299.90" stroke="#d04848" stroke-width="0.7"/><line x1="41" y1="305.88" x2="42.8" y2="305.88" stroke="#d04848" stroke-width="0.7"/><line x1="41" y1="311.86" x2="42.8" y2="311.86" stroke="#d04848" stroke-width="0.7"/><line x1="41" y1="317.85" x2="42.8" y2="317.85" stroke="#d04848" stroke-width="0.7"/><line x1="41" y1="323.83" x2="42.8" y2="323.83" stroke="#d04848" stroke-width="0.7"/><line x1="41" y1="329.81" x2="42.8" y2="329.81" stroke="#d04848" stroke-width="0.7"/><line x1="41" y1="335.80" x2="42.8" y2="335.80" stroke="#d04848" stroke-width="0.7"/><line x1="41" y1="341.78" x2="42.8" y2="341.78" stroke="#d04848" stroke-width="0.7"/><line x1="41" y1="347.76" x2="42.8" y2="347.76" stroke="#d04848" stroke-width="0.7"/><line x1="41" y1="353.75" x2="42.8" y2="353.75" stroke="#d04848" stroke-width="0.7"/><line x1="41" y1="359.73" x2="42.8" y2="359.73" stroke="#d04848" stroke-width="0.7"/><line x1="41" y1="365.71" x2="42.8" y2="365.71" stroke="#d04848" stroke-width="0.7"/><line x1="41" y1="371.70" x2="42.8" y2="371.70" stroke="#d04848" stroke-width="0.7"/><line x1="41" y1="377.68" x2="42.8" y2="377.68" stroke="#d04848" stroke-width="0.7"/><line x1="41" y1="383.67" x2="42.8" y2="383.67" stroke="#d04848" stroke-width="0.7"/><line x1="41" y1="389.65" x2="42.8" y2="389.65" stroke="#d04848" stroke-width="0.7"/><line x1="41" y1="395.63" x2="42.8" y2="395.63" stroke="#d04848" stroke-width="0.7"/><line x1="41" y1="401.62" x2="42.8" y2="401.62" stroke="#d04848" stroke-width="0.7"/><line x1="41" y1="407.60" x2="42.8" y2="407.60" stroke="#d04848" stroke-width="0.7"/><line x1="41" y1="413.58" x2="42.8" y2="413.58" stroke="#d04848" stroke-width="0.7"/><line x1="41" y1="419.57" x2="42.8" y2="419.57" stroke="#d04848" stroke-width="0.7"/><line x1="41" y1="425.55" x2="42.8" y2="425.55" stroke="#d04848" stroke-width="0.7"/><line x1="41" y1="431.53" x2="42.8" y2="431.53" stroke="#d04848" stroke-width="0.7"/><line x1="41" y1="437.52" x2="42.8" y2="437.52" stroke="#d04848" stroke-width="0.7"/><line x1="41" y1="443.50" x2="42.8" y2="443.50" stroke="#d04848" stroke-width="0.7"/><line x1="41" y1="449.48" x2="42.8" y2="449.48" stroke="#d04848" stroke-width="0.7"/><line x1="41" y1="455.47" x2="42.8" y2="455.47" stroke="#d04848" stroke-width="0.7"/><line x1="41" y1="461.45" x2="42.8" y2="461.45" stroke="#d04848" stroke-width="0.7"/><line x1="556.6" y1="135.40" x2="559.5" y2="135.40" stroke="#3030a0" stroke-width="0.9"/><line x1="556.6" y1="155.80" x2="559.5" y2="155.80" stroke="#3030a0" stroke-width="0.9"/><line x1="556.6" y1="176.20" x2="559.5" y2="176.20" stroke="#3030a0" stroke-width="0.9"/><line x1="556.6" y1="196.60" x2="559.5" y2="196.60" stroke="#3030a0" stroke-width="0.9"/><line x1="556.6" y1="217.00" x2="559.5" y2="217.00" stroke="#3030a0" stroke-width="0.9"/><line x1="556.6" y1="237.40" x2="559.5" y2="237.40" stroke="#3030a0" stroke-width="0.9"/><line x1="556.6" y1="257.80" x2="559.5" y2="257.80" stroke="#3030a0" stroke-width="0.9"/><line x1="556.6" y1="278.20" x2="559.5" y2="278.20" stroke="#3030a0" stroke-width="0.9"/><line x1="556.6" y1="298.60" x2="559.5" y2="298.60" stroke="#3030a0" stroke-width="0.9"/><line x1="556.6" y1="319.00" x2="559.5" y2="319.00" stroke="#3030a0" stroke-width="0.9"/><line x1="556.6" y1="339.40" x2="559.5" y2="339.40" stroke="#3030a0" stroke-width="0.9"/><line x1="556.6" y1="359.80" x2="559.5" y2="359.80" stroke="#3030a0" stroke-width="0.9"/><line x1="556.6" y1="380.20" x2="559.5" y2="380.20" stroke="#3030a0" stroke-width="0.9"/><line x1="556.6" y1="400.60" x2="559.5" y2="400.60" stroke="#3030a0" stroke-width="0.9"/><line x1="556.6" y1="421.00" x2="559.5" y2="421.00" stroke="#3030a0" stroke-width="0.9"/><line x1="556.6" y1="441.40" x2="559.5" y2="441.40" stroke="#3030a0" stroke-width="0.9"/><line x1="556.6" y1="135.40" x2="558" y2="135.40" stroke="#3030a0" stroke-width="0.7"/><line x1="556.6" y1="140.50" x2="558" y2="140.50" stroke="#3030a0" stroke-width="0.7"/><line x1="556.6" y1="145.60" x2="558" y2="145.60" stroke="#3030a0" stroke-width="0.7"/><line x1="556.6" y1="150.70" x2="558" y2="150.70" stroke="#3030a0" stroke-width="0.7"/><line x1="556.6" y1="155.80" x2="558" y2="155.80" stroke="#3030a0" stroke-width="0.7"/><line x1="556.6" y1="160.90" x2="558" y2="160.90" stroke="#3030a0" stroke-width="0.7"/><line x1="556.6" y1="166.00" x2="558" y2="166.00" stroke="#3030a0" stroke-width="0.7"/><line x1="556.6" y1="171.10" x2="558" y2="171.10" stroke="#3030a0" stroke-width="0.7"/><line x1="556.6" y1="176.20" x2="558" y2="176.20" stroke="#3030a0" stroke-width="0.7"/><line x1="556.6" y1="181.30" x2="558" y2="181.30" stroke="#3030a0" stroke-width="0.7"/><line x1="556.6" y1="186.40" x2="558" y2="186.40" stroke="#3030a0" stroke-width="0.7"/><line x1="556.6" y1="191.50" x2="558" y2="191.50" stroke="#3030a0" stroke-width="0.7"/><line x1="556.6" y1="196.60" x2="558" y2="196.60" stroke="#3030a0" stroke-width="0.7"/><line x1="556.6" y1="201.70" x2="558" y2="201.70" stroke="#3030a0" stroke-width="0.7"/><line x1="556.6" y1="206.80" x2="558" y2="206.80" stroke="#3030a0" stroke-width="0.7"/><line x1="556.6" y1="211.90" x2="558" y2="211.90" stroke="#3030a0" stroke-width="0.7"/><line x1="556.6" y1="217.00" x2="558" y2="217.00" stroke="#3030a0" stroke-width="0.7"/><line x1="556.6" y1="222.10" x2="558" y2="222.10" stroke="#3030a0" stroke-width="0.7"/><line x1="556.6" y1="227.20" x2="558" y2="227.20" stroke="#3030a0" stroke-width="0.7"/><line x1="556.6" y1="232.30" x2="558" y2="232.30" stroke="#3030a0" stroke-width="0.7"/><line x1="556.6" y1="237.40" x2="558" y2="237.40" stroke="#3030a0" stroke-width="0.7"/><line x1="556.6" y1="242.50" x2="558" y2="242.50" stroke="#3030a0" stroke-width="0.7"/><line x1="556.6" y1="247.60" x2="558" y2="247.60" stroke="#3030a0" stroke-width="0.7"/><line x1="556.6" y1="252.70" x2="558" y2="252.70" stroke="#3030a0" stroke-width="0.7"/><line x1="556.6" y1="257.80" x2="558" y2="257.80" stroke="#3030a0" stroke-width="0.7"/><line x1="556.6" y1="262.90" x2="558" y2="262.90" stroke="#3030a0" stroke-width="0.7"/><line x1="556.6" y1="268.00" x2="558" y2="268.00" stroke="#3030a0" stroke-width="0.7"/><line x1="556.6" y1="273.10" x2="558" y2="273.10" stroke="#3030a0" stroke-width="0.7"/><line x1="556.6" y1="278.20" x2="558" y2="278.20" stroke="#3030a0" stroke-width="0.7"/><line x1="556.6" y1="283.30" x2="558" y2="283.30" stroke="#3030a0" stroke-width="0.7"/><line x1="556.6" y1="288.40" x2="558" y2="288.40" stroke="#3030a0" stroke-width="0.7"/><line x1="556.6" y1="293.50" x2="558" y2="293.50" stroke="#3030a0" stroke-width="0.7"/><line x1="556.6" y1="298.60" x2="558" y2="298.60" stroke="#3030a0" stroke-width="0.7"/><line x1="556.6" y1="303.70" x2="558" y2="303.70" stroke="#3030a0" stroke-width="0.7"/><line x1="556.6" y1="308.80" x2="558" y2="308.80" stroke="#3030a0" stroke-width="0.7"/><line x1="556.6" y1="313.90" x2="558" y2="313.90" stroke="#3030a0" stroke-width="0.7"/><line x1="556.6" y1="319.00" x2="558" y2="319.00" stroke="#3030a0" stroke-width="0.7"/><line x1="556.6" y1="324.10" x2="558" y2="324.10" stroke="#3030a0" stroke-width="0.7"/><line x1="556.6" y1="329.20" x2="558" y2="329.20" stroke="#3030a0" stroke-width="0.7"/><line x1="556.6" y1="334.30" x2="558" y2="334.30" stroke="#3030a0" stroke-width="0.7"/><line x1="556.6" y1="339.40" x2="558" y2="339.40" stroke="#3030a0" stroke-width="0.7"/><line x1="556.6" y1="344.50" x2="558" y2="344.50" stroke="#3030a0" stroke-width="0.7"/><line x1="556.6" y1="349.60" x2="558" y2="349.60" stroke="#3030a0" stroke-width="0.7"/><line x1="556.6" y1="354.70" x2="558" y2="354.70" stroke="#3030a0" stroke-width="0.7"/><line x1="556.6" y1="359.80" x2="558" y2="359.80" stroke="#3030a0" stroke-width="0.7"/><line x1="556.6" y1="364.90" x2="558" y2="364.90" stroke="#3030a0" stroke-width="0.7"/><line x1="556.6" y1="370.00" x2="558" y2="370.00" stroke="#3030a0" stroke-width="0.7"/><line x1="556.6" y1="375.10" x2="558" y2="375.10" stroke="#3030a0" stroke-width="0.7"/><line x1="556.6" y1="380.20" x2="558" y2="380.20" stroke="#3030a0" stroke-width="0.7"/><line x1="556.6" y1="385.30" x2="558" y2="385.30" stroke="#3030a0" stroke-width="0.7"/><line x1="556.6" y1="390.40" x2="558" y2="390.40" stroke="#3030a0" stroke-width="0.7"/><line x1="556.6" y1="395.50" x2="558" y2="395.50" stroke="#3030a0" stroke-width="0.7"/><line x1="556.6" y1="400.60" x2="558" y2="400.60" stroke="#3030a0" stroke-width="0.7"/><line x1="556.6" y1="405.70" x2="558" y2="405.70" stroke="#3030a0" stroke-width="0.7"/><line x1="556.6" y1="410.80" x2="558" y2="410.80" stroke="#3030a0" stroke-width="0.7"/><line x1="556.6" y1="415.90" x2="558" y2="415.90" stroke="#3030a0" stroke-width="0.7"/><line x1="556.6" y1="421.00" x2="558" y2="421.00" stroke="#3030a0" stroke-width="0.7"/><line x1="556.6" y1="426.10" x2="558" y2="426.10" stroke="#3030a0" stroke-width="0.7"/><line x1="556.6" y1="431.20" x2="558" y2="431.20" stroke="#3030a0" stroke-width="0.7"/><line x1="556.6" y1="436.30" x2="558" y2="436.30" stroke="#3030a0" stroke-width="0.7"/><line x1="42.80" y1="464.4" x2="42.80" y2="466.2" stroke="#707070" stroke-width="0.6"/><line x1="48.58" y1="464.4" x2="48.58" y2="466.2" stroke="#707070" stroke-width="0.6"/><line x1="54.36" y1="464.4" x2="54.36" y2="466.2" stroke="#707070" stroke-width="0.6"/><line x1="60.14" y1="464.4" x2="60.14" y2="466.2" stroke="#707070" stroke-width="0.6"/><line x1="65.91" y1="464.4" x2="65.91" y2="466.2" stroke="#707070" stroke-width="0.6"/><line x1="71.69" y1="464.4" x2="71.69" y2="466.2" stroke="#707070" stroke-width="0.6"/><line x1="77.47" y1="464.4" x2="77.47" y2="466.2" stroke="#707070" stroke-width="0.6"/><line x1="83.25" y1="464.4" x2="83.25" y2="466.2" stroke="#707070" stroke-width="0.6"/><line x1="89.03" y1="464.4" x2="89.03" y2="466.2" stroke="#707070" stroke-width="0.6"/><line x1="94.81" y1="464.4" x2="94.81" y2="466.2" stroke="#707070" stroke-width="0.6"/><line x1="100.59" y1="464.4" x2="100.59" y2="466.2" stroke="#707070" stroke-width="0.6"/><line x1="106.37" y1="464.4" x2="106.37" y2="466.2" stroke="#707070" stroke-width="0.6"/><line x1="112.14" y1="464.4" x2="112.14" y2="466.2" stroke="#707070" stroke-width="0.6"/><line x1="117.92" y1="464.4" x2="117.92" y2="466.2" stroke="#707070" stroke-width="0.6"/><line x1="123.70" y1="464.4" x2="123.70" y2="466.2" stroke="#707070" stroke-width="0.6"/><line x1="129.48" y1="464.4" x2="129.48" y2="466.2" stroke="#707070" stroke-width="0.6"/><line x1="135.26" y1="464.4" x2="135.26" y2="466.2" stroke="#707070" stroke-width="0.6"/><line x1="141.04" y1="464.4" x2="141.04" y2="466.2" stroke="#707070" stroke-width="0.6"/><line x1="146.82" y1="464.4" x2="146.82" y2="466.2" stroke="#707070" stroke-width="0.6"/><line x1="152.60" y1="464.4" x2="152.60" y2="466.2" stroke="#707070" stroke-width="0.6"/><line x1="158.38" y1="464.4" x2="158.38" y2="466.2" stroke="#707070" stroke-width="0.6"/><line x1="164.15" y1="464.4" x2="164.15" y2="466.2" stroke="#707070" stroke-width="0.6"/><line x1="169.93" y1="464.4" x2="169.93" y2="466.2" stroke="#707070" stroke-width="0.6"/><line x1="175.71" y1="464.4" x2="175.71" y2="466.2" stroke="#707070" stroke-width="0.6"/><line x1="181.49" y1="464.4" x2="181.49" y2="466.2" stroke="#707070" stroke-width="0.6"/><line x1="187.27" y1="464.4" x2="187.27" y2="466.2" stroke="#707070" stroke-width="0.6"/><line x1="193.05" y1="464.4" x2="193.05" y2="466.2" stroke="#707070" stroke-width="0.6"/><line x1="198.83" y1="464.4" x2="198.83" y2="466.2" stroke="#707070" stroke-width="0.6"/><line x1="204.60" y1="464.4" x2="204.60" y2="466.2" stroke="#707070" stroke-width="0.6"/><line x1="210.38" y1="464.4" x2="210.38" y2="466.2" stroke="#707070" stroke-width="0.6"/><line x1="216.16" y1="464.4" x2="216.16" y2="466.2" stroke="#707070" stroke-width="0.6"/><line x1="221.94" y1="464.4" x2="221.94" y2="466.2" stroke="#707070" stroke-width="0.6"/><line x1="227.72" y1="464.4" x2="227.72" y2="466.2" stroke="#707070" stroke-width="0.6"/><line x1="233.50" y1="464.4" x2="233.50" y2="466.2" stroke="#707070" stroke-width="0.6"/><line x1="239.28" y1="464.4" x2="239.28" y2="466.2" stroke="#707070" stroke-width="0.6"/><line x1="245.06" y1="464.4" x2="245.06" y2="466.2" stroke="#707070" stroke-width="0.6"/><line x1="250.83" y1="464.4" x2="250.83" y2="466.2" stroke="#707070" stroke-width="0.6"/><line x1="256.61" y1="464.4" x2="256.61" y2="466.2" stroke="#707070" stroke-width="0.6"/><line x1="262.39" y1="464.4" x2="262.39" y2="466.2" stroke="#707070" stroke-width="0.6"/><line x1="268.17" y1="464.4" x2="268.17" y2="466.2" stroke="#707070" stroke-width="0.6"/><line x1="273.95" y1="464.4" x2="273.95" y2="466.2" stroke="#707070" stroke-width="0.6"/><line x1="279.73" y1="464.4" x2="279.73" y2="466.2" stroke="#707070" stroke-width="0.6"/><line x1="285.51" y1="464.4" x2="285.51" y2="466.2" stroke="#707070" stroke-width="0.6"/><line x1="291.29" y1="464.4" x2="291.29" y2="466.2" stroke="#707070" stroke-width="0.6"/><line x1="297.06" y1="464.4" x2="297.06" y2="466.2" stroke="#707070" stroke-width="0.6"/><line x1="302.84" y1="464.4" x2="302.84" y2="466.2" stroke="#707070" stroke-width="0.6"/><line x1="308.62" y1="464.4" x2="308.62" y2="466.2" stroke="#707070" stroke-width="0.6"/><line x1="314.40" y1="464.4" x2="314.40" y2="466.2" stroke="#707070" stroke-width="0.6"/><line x1="320.18" y1="464.4" x2="320.18" y2="466.2" stroke="#707070" stroke-width="0.6"/><line x1="325.96" y1="464.4" x2="325.96" y2="466.2" stroke="#707070" stroke-width="0.6"/><line x1="331.74" y1="464.4" x2="331.74" y2="466.2" stroke="#707070" stroke-width="0.6"/><line x1="337.52" y1="464.4" x2="337.52" y2="466.2" stroke="#707070" stroke-width="0.6"/><line x1="343.30" y1="464.4" x2="343.30" y2="466.2" stroke="#707070" stroke-width="0.6"/><line x1="349.07" y1="464.4" x2="349.07" y2="466.2" stroke="#707070" stroke-width="0.6"/><line x1="354.85" y1="464.4" x2="354.85" y2="466.2" stroke="#707070" stroke-width="0.6"/><line x1="360.63" y1="464.4" x2="360.63" y2="466.2" stroke="#707070" stroke-width="0.6"/><line x1="366.41" y1="464.4" x2="366.41" y2="466.2" stroke="#707070" stroke-width="0.6"/><line x1="372.19" y1="464.4" x2="372.19" y2="466.2" stroke="#707070" stroke-width="0.6"/><line x1="377.97" y1="464.4" x2="377.97" y2="466.2" stroke="#707070" stroke-width="0.6"/><line x1="383.75" y1="464.4" x2="383.75" y2="466.2" stroke="#707070" stroke-width="0.6"/><line x1="389.52" y1="464.4" x2="389.52" y2="466.2" stroke="#707070" stroke-width="0.6"/><line x1="395.30" y1="464.4" x2="395.30" y2="466.2" stroke="#707070" stroke-width="0.6"/><line x1="401.08" y1="464.4" x2="401.08" y2="466.2" stroke="#707070" stroke-width="0.6"/><line x1="406.86" y1="464.4" x2="406.86" y2="466.2" stroke="#707070" stroke-width="0.6"/><line x1="412.64" y1="464.4" x2="412.64" y2="466.2" stroke="#707070" stroke-width="0.6"/><line x1="418.42" y1="464.4" x2="418.42" y2="466.2" stroke="#707070" stroke-width="0.6"/><line x1="424.20" y1="464.4" x2="424.20" y2="466.2" stroke="#707070" stroke-width="0.6"/><line x1="429.98" y1="464.4" x2="429.98" y2="466.2" stroke="#707070" stroke-width="0.6"/><line x1="435.75" y1="464.4" x2="435.75" y2="466.2" stroke="#707070" stroke-width="0.6"/><line x1="441.53" y1="464.4" x2="441.53" y2="466.2" stroke="#707070" stroke-width="0.6"/><line x1="447.31" y1="464.4" x2="447.31" y2="466.2" stroke="#707070" stroke-width="0.6"/><line x1="453.09" y1="464.4" x2="453.09" y2="466.2" stroke="#707070" stroke-width="0.6"/><line x1="458.87" y1="464.4" x2="458.87" y2="466.2" stroke="#707070" stroke-width="0.6"/><line x1="464.65" y1="464.4" x2="464.65" y2="466.2" stroke="#707070" stroke-width="0.6"/><line x1="470.43" y1="464.4" x2="470.43" y2="466.2" stroke="#707070" stroke-width="0.6"/><line x1="476.21" y1="464.4" x2="476.21" y2="466.2" stroke="#707070" stroke-width="0.6"/><line x1="481.98" y1="464.4" x2="481.98" y2="466.2" stroke="#707070" stroke-width="0.6"/><line x1="487.76" y1="464.4" x2="487.76" y2="466.2" stroke="#707070" stroke-width="0.6"/><line x1="493.54" y1="464.4" x2="493.54" y2="466.2" stroke="#707070" stroke-width="0.6"/><line x1="499.32" y1="464.4" x2="499.32" y2="466.2" stroke="#707070" stroke-width="0.6"/><line x1="505.10" y1="464.4" x2="505.10" y2="466.2" stroke="#707070" stroke-width="0.6"/><line x1="510.88" y1="464.4" x2="510.88" y2="466.2" stroke="#707070" stroke-width="0.6"/><line x1="516.66" y1="464.4" x2="516.66" y2="466.2" stroke="#707070" stroke-width="0.6"/><line x1="522.44" y1="464.4" x2="522.44" y2="466.2" stroke="#707070" stroke-width="0.6"/><line x1="528.21" y1="464.4" x2="528.21" y2="466.2" stroke="#707070" stroke-width="0.6"/><line x1="533.99" y1="464.4" x2="533.99" y2="466.2" stroke="#707070" stroke-width="0.6"/><line x1="539.77" y1="464.4" x2="539.77" y2="466.2" stroke="#707070" stroke-width="0.6"/><line x1="545.55" y1="464.4" x2="545.55" y2="466.2" stroke="#707070" stroke-width="0.6"/><line x1="551.33" y1="464.4" x2="551.33" y2="466.2" stroke="#707070" stroke-width="0.6"/><line x1="42.8" y1="135.35" x2="42.8" y2="464.4" stroke="#d02828" stroke-width="1.4"/><line x1="556.6" y1="135.35" x2="556.6" y2="464.4" stroke="#282890" stroke-width="1.1"/><line x1="42.8" y1="464.4" x2="557.3000000000001" y2="464.4" stroke="#000" stroke-width="1.3"/><polyline points="42.5,246.0 51.0,233.0 57.5,225.7 63.9,222.0 67.6,225.7 70.4,234.9 76.8,263.9 82.3,289.7 87.8,309.0 94.3,321.0 98.9,335.7 103.2,362.3 106.1,375.5 109.9,387.8 115.5,399.1 123.1,407.6 128.7,410.4 132.1,410.0 135.3,414.2 139.1,416.1 142.9,411.4 146.7,409.5 150.4,412.3 154.2,409.5 158.0,401.9 162.7,401.9 168.4,401.0 174.0,400.0 179.7,393.4 186.3,382.1 191.0,379.3 198.2,377.9 201.4,373.6 205.2,361.3 210.0,348.6 217.4,328.3 226.6,304.4 230.2,304.4 233.9,305.3 239.4,291.5 246.8,279.6 257.8,262.1 267.0,247.4 274.4,239.5 279.9,236.7 286.4,234.5 292.8,229.4 302.0,218.3 313.1,205.5 322.3,194.4 331.5,179.7 337.0,175.1 340.7,177.8 346.2,198.1 351.7,222.0 357.2,245.0 360.9,263.9 366.4,296.1 371.9,304.4 377.5,322.8 384.8,344.9 389.4,368.9 393.2,387.8 397.0,404.8 402.7,418.0 408.3,429.3 414.0,439.2 416.8,435.9 420.6,429.3 427.2,427.1 431.9,427.8 434.8,424.6 436.7,418.0 441.4,415.2 448.0,407.6 455.6,398.2 463.1,388.7 472.6,372.7 478.2,364.2 484.8,350.0 490.4,339.4 497.8,322.8 505.1,307.2 508.8,306.6 513.4,309.0 517.1,303.5 521.7,293.4 529.1,280.5 538.3,266.7 547.5,253.8 553.9,246.4 556.3,245.5" fill="none" stroke="#c85050" stroke-width="0.8" stroke-linejoin="round"/><polyline points="42.8,169.6 45.5,173.2 48.3,174.5 51.0,167.2 53.8,170.9 56.6,172.7 58.8,172.7 62.1,182.4 64.8,189.3 67.6,191.6 70.0,199.9 72.2,193.5 75.0,185.2 78.6,187.0 82.7,182.4 85.6,184.3 88.8,189.8 91.5,200.8 94.3,216.5 96.1,240.0 98.9,258.4 100.7,276.8 102.2,291.5 103.5,283.2 106.2,291.5 109.6,294.8 112.7,288.8 115.0,291.8 118.5,303.2 121.6,334.0 123.8,327.0 126.9,312.4 128.6,323.5 131.7,320.8 133.5,297.0 134.4,297.9 135.7,322.6 137.4,326.1 142.3,313.3 144.5,323.0 146.3,321.7 148.0,328.7 149.3,321.7 151.1,340.2 153.3,327.0 156.4,307.2 159.9,312.0 161.3,321.7 163.1,320.4 165.3,324.3 167.0,316.4 169.2,333.1 172.3,317.7 174.5,326.1 177.6,307.2 181.1,312.9 183.3,323.5 185.1,316.4 187.3,334.9 189.0,317.3 191.3,327.0 193.0,319.0 195.2,333.1 198.7,310.2 200.1,296.6 201.9,286.9 204.7,275.0 206.5,272.2 208.4,276.8 211.1,258.4 214.6,245.0 217.4,222.0 220.1,228.5 222.9,227.2 226.2,234.9 228.4,211.0 230.2,196.2 232.1,192.6 233.6,193.5 235.4,184.3 236.7,194.4 240.4,240.0 242.8,248.3 245.0,243.7 247.7,251.0 249.6,265.8 250.9,271.3 252.3,259.3 253.8,263.9 256.0,275.9 257.8,273.1 260.6,279.6 263.4,293.4 265.2,303.5 268.0,299.8 270.7,299.8 273.5,290.6 275.9,298.9 278.5,294.3 281.4,295.2 284.0,290.1 286.9,303.5 289.1,290.6 291.9,307.2 294.7,306.2 298.0,294.3 300.5,290.6 302.9,295.2 305.7,289.7 309.4,282.3 311.2,267.6 313.1,251.0 315.8,243.7 320.2,239.5 325.9,248.3 329.6,240.0 332.4,236.7 335.5,234.0 338.8,211.9 341.0,211.0 343.4,216.5 347.1,209.1 350.8,198.1 354.8,188.9 357.2,192.6 360.9,205.5 365.5,210.0 368.3,225.7 369.7,235.8 372.0,222.9 373.8,240.0 376.5,258.4 378.9,269.4 380.2,267.6 382.2,287.8 384.6,286.9 387.0,300.7 390.7,283.2 392.9,288.8 395.6,321.0 397.5,317.3 399.9,319.1 401.2,313.6 403.9,339.4 406.7,332.0 409.1,348.6 410.9,325.6 412.8,341.2 415.9,322.8 418.6,298.0 421.4,313.6 424.2,332.9 427.5,322.8 431.5,319.1 434.3,310.8 437.0,298.9 440.7,311.8 444.0,309.0 446.2,313.6 447.7,304.4 449.6,321.0 452.7,300.7 455.8,295.2 458.2,299.8 459.5,291.5 461.9,263.9 463.7,303.5 465.6,282.3 467.4,292.4 469.8,281.4 472.0,287.8 475.3,288.8 477.5,269.4 480.8,262.1 483.6,276.8 487.7,291.2 490.4,276.8 493.2,256.6 496.9,244.6 500.5,239.5 502.9,218.3 505.1,210.6 508.8,220.2 511.9,234.0 514.3,218.3 517.1,212.8 519.5,197.2 521.3,199.6 523.5,180.6 526.3,185.2 529.1,173.2 533.7,176.0 537.3,186.1 541.6,195.3 544.7,184.8 547.5,189.8 552.1,185.2 554.5,192.6 556.5,188.9" fill="none" stroke="#4848a8" stroke-width="0.8" stroke-linejoin="round"/><text x="29.5" y="137.8" font-size="6.8" fill="#c05050" stroke="#c05050" stroke-width="0.15" text-anchor="start" textLength="9.4" lengthAdjust="spacingAndGlyphs">100</text><text x="32.3" y="149.77" font-size="6.8" fill="#c05050" stroke="#c05050" stroke-width="0.15" text-anchor="start" textLength="6.6" lengthAdjust="spacingAndGlyphs">98</text><text x="32.3" y="161.73" font-size="6.8" fill="#c05050" stroke="#c05050" stroke-width="0.15" text-anchor="start" textLength="6.6" lengthAdjust="spacingAndGlyphs">96</text><text x="32.3" y="173.7" font-size="6.8" fill="#c05050" stroke="#c05050" stroke-width="0.15" text-anchor="start" textLength="6.6" lengthAdjust="spacingAndGlyphs">94</text><text x="32.3" y="185.67" font-size="6.8" fill="#c05050" stroke="#c05050" stroke-width="0.15" text-anchor="start" textLength="6.6" lengthAdjust="spacingAndGlyphs">92</text><text x="32.3" y="197.63" font-size="6.8" fill="#c05050" stroke="#c05050" stroke-width="0.15" text-anchor="start" textLength="6.6" lengthAdjust="spacingAndGlyphs">90</text><text x="32.3" y="209.6" font-size="6.8" fill="#c05050" stroke="#c05050" stroke-width="0.15" text-anchor="start" textLength="6.6" lengthAdjust="spacingAndGlyphs">88</text><text x="32.3" y="221.57" font-size="6.8" fill="#c05050" stroke="#c05050" stroke-width="0.15" text-anchor="start" textLength="6.6" lengthAdjust="spacingAndGlyphs">86</text><text x="32.3" y="233.54" font-size="6.8" fill="#c05050" stroke="#c05050" stroke-width="0.15" text-anchor="start" textLength="6.6" lengthAdjust="spacingAndGlyphs">84</text><text x="32.3" y="245.5" font-size="6.8" fill="#c05050" stroke="#c05050" stroke-width="0.15" text-anchor="start" textLength="6.6" lengthAdjust="spacingAndGlyphs">82</text><text x="32.3" y="257.47" font-size="6.8" fill="#c05050" stroke="#c05050" stroke-width="0.15" text-anchor="start" textLength="6.6" lengthAdjust="spacingAndGlyphs">80</text><text x="32.3" y="269.44" font-size="6.8" fill="#c05050" stroke="#c05050" stroke-width="0.15" text-anchor="start" textLength="6.6" lengthAdjust="spacingAndGlyphs">78</text><text x="32.3" y="281.4" font-size="6.8" fill="#c05050" stroke="#c05050" stroke-width="0.15" text-anchor="start" textLength="6.6" lengthAdjust="spacingAndGlyphs">76</text><text x="32.3" y="293.37" font-size="6.8" fill="#c05050" stroke="#c05050" stroke-width="0.15" text-anchor="start" textLength="6.6" lengthAdjust="spacingAndGlyphs">74</text><text x="32.3" y="305.34" font-size="6.8" fill="#c05050" stroke="#c05050" stroke-width="0.15" text-anchor="start" textLength="6.6" lengthAdjust="spacingAndGlyphs">72</text><text x="32.3" y="317.31" font-size="6.8" fill="#c05050" stroke="#c05050" stroke-width="0.15" text-anchor="start" textLength="6.6" lengthAdjust="spacingAndGlyphs">70</text><text x="32.3" y="329.27" font-size="6.8" fill="#c05050" stroke="#c05050" stroke-width="0.15" text-anchor="start" textLength="6.6" lengthAdjust="spacingAndGlyphs">68</text><text x="32.3" y="341.24" font-size="6.8" fill="#c05050" stroke="#c05050" stroke-width="0.15" text-anchor="start" textLength="6.6" lengthAdjust="spacingAndGlyphs">66</text><text x="32.3" y="353.21" font-size="6.8" fill="#c05050" stroke="#c05050" stroke-width="0.15" text-anchor="start" textLength="6.6" lengthAdjust="spacingAndGlyphs">64</text><text x="32.3" y="365.17" font-size="6.8" fill="#c05050" stroke="#c05050" stroke-width="0.15" text-anchor="start" textLength="6.6" lengthAdjust="spacingAndGlyphs">62</text><text x="32.3" y="377.14" font-size="6.8" fill="#c05050" stroke="#c05050" stroke-width="0.15" text-anchor="start" textLength="6.6" lengthAdjust="spacingAndGlyphs">60</text><text x="32.3" y="389.11" font-size="6.8" fill="#c05050" stroke="#c05050" stroke-width="0.15" text-anchor="start" textLength="6.6" lengthAdjust="spacingAndGlyphs">58</text><text x="32.3" y="401.07" font-size="6.8" fill="#c05050" stroke="#c05050" stroke-width="0.15" text-anchor="start" textLength="6.6" lengthAdjust="spacingAndGlyphs">56</text><text x="32.3" y="413.04" font-size="6.8" fill="#c05050" stroke="#c05050" stroke-width="0.15" text-anchor="start" textLength="6.6" lengthAdjust="spacingAndGlyphs">54</text><text x="32.3" y="425.01" font-size="6.8" fill="#c05050" stroke="#c05050" stroke-width="0.15" text-anchor="start" textLength="6.6" lengthAdjust="spacingAndGlyphs">52</text><text x="32.3" y="436.97" font-size="6.8" fill="#c05050" stroke="#c05050" stroke-width="0.15" text-anchor="start" textLength="6.6" lengthAdjust="spacingAndGlyphs">50</text><text x="32.3" y="448.94" font-size="6.8" fill="#c05050" stroke="#c05050" stroke-width="0.15" text-anchor="start" textLength="6.6" lengthAdjust="spacingAndGlyphs">48</text><text x="32.3" y="460.91" font-size="6.8" fill="#c05050" stroke="#c05050" stroke-width="0.15" text-anchor="start" textLength="6.6" lengthAdjust="spacingAndGlyphs">46</text><text x="559.6" y="137.85" font-size="6.8" fill="#3838a0" stroke="#3838a0" stroke-width="0.15" text-anchor="start" textLength="8.2" lengthAdjust="spacingAndGlyphs">0.2</text><text x="559.6" y="158.25" font-size="6.8" fill="#3838a0" stroke="#3838a0" stroke-width="0.15" text-anchor="start" textLength="8.2" lengthAdjust="spacingAndGlyphs">0.1</text><text x="559.6" y="178.65" font-size="6.8" fill="#3838a0" stroke="#3838a0" stroke-width="0.15" text-anchor="start" textLength="2.8" lengthAdjust="spacingAndGlyphs">0</text><text x="559.6" y="199.05" font-size="6.8" fill="#3838a0" stroke="#3838a0" stroke-width="0.15" text-anchor="start" textLength="10.8" lengthAdjust="spacingAndGlyphs">&#8722;0.1</text><text x="559.6" y="219.45" font-size="6.8" fill="#3838a0" stroke="#3838a0" stroke-width="0.15" text-anchor="start" textLength="10.8" lengthAdjust="spacingAndGlyphs">&#8722;0.2</text><text x="559.6" y="239.85" font-size="6.8" fill="#3838a0" stroke="#3838a0" stroke-width="0.15" text-anchor="start" textLength="10.8" lengthAdjust="spacingAndGlyphs">&#8722;0.3</text><text x="559.6" y="260.25" font-size="6.8" fill="#3838a0" stroke="#3838a0" stroke-width="0.15" text-anchor="start" textLength="10.8" lengthAdjust="spacingAndGlyphs">&#8722;0.4</text><text x="559.6" y="280.65" font-size="6.8" fill="#3838a0" stroke="#3838a0" stroke-width="0.15" text-anchor="start" textLength="10.8" lengthAdjust="spacingAndGlyphs">&#8722;0.5</text><text x="559.6" y="301.05" font-size="6.8" fill="#3838a0" stroke="#3838a0" stroke-width="0.15" text-anchor="start" textLength="10.8" lengthAdjust="spacingAndGlyphs">&#8722;0.6</text><text x="559.6" y="321.45" font-size="6.8" fill="#3838a0" stroke="#3838a0" stroke-width="0.15" text-anchor="start" textLength="10.8" lengthAdjust="spacingAndGlyphs">&#8722;0.7</text><text x="559.6" y="341.85" font-size="6.8" fill="#3838a0" stroke="#3838a0" stroke-width="0.15" text-anchor="start" textLength="10.8" lengthAdjust="spacingAndGlyphs">&#8722;0.8</text><text x="559.6" y="362.25" font-size="6.8" fill="#3838a0" stroke="#3838a0" stroke-width="0.15" text-anchor="start" textLength="10.8" lengthAdjust="spacingAndGlyphs">&#8722;0.9</text><text x="559.6" y="382.65" font-size="6.8" fill="#3838a0" stroke="#3838a0" stroke-width="0.15" text-anchor="start" textLength="5.4" lengthAdjust="spacingAndGlyphs">&#8722;1</text><text x="559.6" y="403.05" font-size="6.8" fill="#3838a0" stroke="#3838a0" stroke-width="0.15" text-anchor="start" textLength="10.8" lengthAdjust="spacingAndGlyphs">&#8722;1.1</text><text x="559.6" y="423.45" font-size="6.8" fill="#3838a0" stroke="#3838a0" stroke-width="0.15" text-anchor="start" textLength="10.8" lengthAdjust="spacingAndGlyphs">&#8722;1.2</text><text x="559.6" y="443.85" font-size="6.8" fill="#3838a0" stroke="#3838a0" stroke-width="0.15" text-anchor="start" textLength="10.8" lengthAdjust="spacingAndGlyphs">&#8722;1.3</text><text x="41.15" y="473.6" font-size="6.9" fill="#303030" stroke="#303030" stroke-width="0.15" text-anchor="start" textLength="3.3" lengthAdjust="spacingAndGlyphs">0</text><text x="62.61" y="473.6" font-size="6.9" fill="#303030" stroke="#303030" stroke-width="0.15" text-anchor="start" textLength="6.6" lengthAdjust="spacingAndGlyphs">20</text><text x="85.73" y="473.6" font-size="6.9" fill="#303030" stroke="#303030" stroke-width="0.15" text-anchor="start" textLength="6.6" lengthAdjust="spacingAndGlyphs">40</text><text x="108.84" y="473.6" font-size="6.9" fill="#303030" stroke="#303030" stroke-width="0.15" text-anchor="start" textLength="6.6" lengthAdjust="spacingAndGlyphs">60</text><text x="131.96" y="473.6" font-size="6.9" fill="#303030" stroke="#303030" stroke-width="0.15" text-anchor="start" textLength="6.6" lengthAdjust="spacingAndGlyphs">80</text><text x="153.57" y="473.6" font-size="6.9" fill="#303030" stroke="#303030" stroke-width="0.15" text-anchor="start" textLength="9.6" lengthAdjust="spacingAndGlyphs">100</text><text x="176.69" y="473.6" font-size="6.9" fill="#303030" stroke="#303030" stroke-width="0.15" text-anchor="start" textLength="9.6" lengthAdjust="spacingAndGlyphs">120</text><text x="199.8" y="473.6" font-size="6.9" fill="#303030" stroke="#303030" stroke-width="0.15" text-anchor="start" textLength="9.6" lengthAdjust="spacingAndGlyphs">140</text><text x="222.92" y="473.6" font-size="6.9" fill="#303030" stroke="#303030" stroke-width="0.15" text-anchor="start" textLength="9.6" lengthAdjust="spacingAndGlyphs">160</text><text x="246.03" y="473.6" font-size="6.9" fill="#303030" stroke="#303030" stroke-width="0.15" text-anchor="start" textLength="9.6" lengthAdjust="spacingAndGlyphs">180</text><text x="269.15" y="473.6" font-size="6.9" fill="#303030" stroke="#303030" stroke-width="0.15" text-anchor="start" textLength="9.6" lengthAdjust="spacingAndGlyphs">200</text><text x="292.26" y="473.6" font-size="6.9" fill="#303030" stroke="#303030" stroke-width="0.15" text-anchor="start" textLength="9.6" lengthAdjust="spacingAndGlyphs">220</text><text x="315.38" y="473.6" font-size="6.9" fill="#303030" stroke="#303030" stroke-width="0.15" text-anchor="start" textLength="9.6" lengthAdjust="spacingAndGlyphs">240</text><text x="338.5" y="473.6" font-size="6.9" fill="#303030" stroke="#303030" stroke-width="0.15" text-anchor="start" textLength="9.6" lengthAdjust="spacingAndGlyphs">260</text><text x="361.61" y="473.6" font-size="6.9" fill="#303030" stroke="#303030" stroke-width="0.15" text-anchor="start" textLength="9.6" lengthAdjust="spacingAndGlyphs">280</text><text x="384.72" y="473.6" font-size="6.9" fill="#303030" stroke="#303030" stroke-width="0.15" text-anchor="start" textLength="9.6" lengthAdjust="spacingAndGlyphs">300</text><text x="407.84" y="473.6" font-size="6.9" fill="#303030" stroke="#303030" stroke-width="0.15" text-anchor="start" textLength="9.6" lengthAdjust="spacingAndGlyphs">320</text><text x="430.95" y="473.6" font-size="6.9" fill="#303030" stroke="#303030" stroke-width="0.15" text-anchor="start" textLength="9.6" lengthAdjust="spacingAndGlyphs">340</text><text x="454.07" y="473.6" font-size="6.9" fill="#303030" stroke="#303030" stroke-width="0.15" text-anchor="start" textLength="9.6" lengthAdjust="spacingAndGlyphs">360</text><text x="477.18" y="473.6" font-size="6.9" fill="#303030" stroke="#303030" stroke-width="0.15" text-anchor="start" textLength="9.6" lengthAdjust="spacingAndGlyphs">380</text><text x="500.3" y="473.6" font-size="6.9" fill="#303030" stroke="#303030" stroke-width="0.15" text-anchor="start" textLength="9.6" lengthAdjust="spacingAndGlyphs">400</text><text x="523.41" y="473.6" font-size="6.9" fill="#303030" stroke="#303030" stroke-width="0.15" text-anchor="start" textLength="9.6" lengthAdjust="spacingAndGlyphs">420</text><text x="546.53" y="473.6" font-size="6.9" fill="#303030" stroke="#303030" stroke-width="0.15" text-anchor="start" textLength="9.6" lengthAdjust="spacingAndGlyphs">440</text><text x="290.1" y="479.7" font-size="6.2" fill="#303030" stroke="#303030" stroke-width="0.15" text-anchor="start" textLength="17.9" lengthAdjust="spacingAndGlyphs">metres</text><text transform="translate(25.8 307.4) rotate(-90)" font-size="6.4" fill="#c84848" textLength="14.8" lengthAdjust="spacingAndGlyphs">km/h</text><text transform="translate(579.2 332.4) rotate(-90)" font-size="6.4" fill="#3838a0" textLength="65.6" lengthAdjust="spacingAndGlyphs">Lateral Acceleration (g)</text></svg><svg style="position:absolute;left:0;top:0;font-family:'Liberation Sans',sans-serif" width="1024" height="625" viewBox="0 0 1024 625"><line x1="665.60" y1="132.2" x2="665.60" y2="474.2" stroke="#9a9a9a" stroke-width="0.8" stroke-dasharray="1.6 1.7"/><line x1="698.76" y1="132.2" x2="698.76" y2="474.2" stroke="#9a9a9a" stroke-width="0.8" stroke-dasharray="1.6 1.7"/><line x1="731.92" y1="132.2" x2="731.92" y2="474.2" stroke="#9a9a9a" stroke-width="0.8" stroke-dasharray="1.6 1.7"/><line x1="765.08" y1="132.2" x2="765.08" y2="474.2" stroke="#9a9a9a" stroke-width="0.8" stroke-dasharray="1.6 1.7"/><line x1="798.24" y1="132.2" x2="798.24" y2="474.2" stroke="#9a9a9a" stroke-width="0.8" stroke-dasharray="1.6 1.7"/><line x1="831.40" y1="132.2" x2="831.40" y2="474.2" stroke="#9a9a9a" stroke-width="0.8" stroke-dasharray="1.6 1.7"/><line x1="864.56" y1="132.2" x2="864.56" y2="474.2" stroke="#9a9a9a" stroke-width="0.8" stroke-dasharray="1.6 1.7"/><line x1="897.72" y1="132.2" x2="897.72" y2="474.2" stroke="#9a9a9a" stroke-width="0.8" stroke-dasharray="1.6 1.7"/><line x1="930.88" y1="132.2" x2="930.88" y2="474.2" stroke="#9a9a9a" stroke-width="0.8" stroke-dasharray="1.6 1.7"/><line x1="964.04" y1="132.2" x2="964.04" y2="474.2" stroke="#9a9a9a" stroke-width="0.8" stroke-dasharray="1.6 1.7"/><line x1="997.20" y1="132.2" x2="997.20" y2="474.2" stroke="#9a9a9a" stroke-width="0.8" stroke-dasharray="1.6 1.7"/><line x1="659.7" y1="135.40" x2="1010.0" y2="135.40" stroke="#9a9a9a" stroke-width="0.8" stroke-dasharray="1.6 1.7"/><line x1="659.7" y1="143.51" x2="1010.0" y2="143.51" stroke="#9a9a9a" stroke-width="0.8" stroke-dasharray="1.6 1.7"/><line x1="659.7" y1="151.62" x2="1010.0" y2="151.62" stroke="#9a9a9a" stroke-width="0.8" stroke-dasharray="1.6 1.7"/><line x1="659.7" y1="159.73" x2="1010.0" y2="159.73" stroke="#9a9a9a" stroke-width="0.8" stroke-dasharray="1.6 1.7"/><line x1="659.7" y1="167.84" x2="1010.0" y2="167.84" stroke="#9a9a9a" stroke-width="0.8" stroke-dasharray="1.6 1.7"/><line x1="659.7" y1="175.95" x2="1010.0" y2="175.95" stroke="#9a9a9a" stroke-width="0.8" stroke-dasharray="1.6 1.7"/><line x1="659.7" y1="184.06" x2="1010.0" y2="184.06" stroke="#9a9a9a" stroke-width="0.8" stroke-dasharray="1.6 1.7"/><line x1="659.7" y1="192.17" x2="1010.0" y2="192.17" stroke="#9a9a9a" stroke-width="0.8" stroke-dasharray="1.6 1.7"/><line x1="659.7" y1="200.28" x2="1010.0" y2="200.28" stroke="#9a9a9a" stroke-width="0.8" stroke-dasharray="1.6 1.7"/><line x1="659.7" y1="208.39" x2="1010.0" y2="208.39" stroke="#9a9a9a" stroke-width="0.8" stroke-dasharray="1.6 1.7"/><line x1="659.7" y1="216.50" x2="1010.0" y2="216.50" stroke="#9a9a9a" stroke-width="0.8" stroke-dasharray="1.6 1.7"/><line x1="659.7" y1="224.61" x2="1010.0" y2="224.61" stroke="#9a9a9a" stroke-width="0.8" stroke-dasharray="1.6 1.7"/><line x1="659.7" y1="232.72" x2="1010.0" y2="232.72" stroke="#9a9a9a" stroke-width="0.8" stroke-dasharray="1.6 1.7"/><line x1="659.7" y1="240.83" x2="1010.0" y2="240.83" stroke="#9a9a9a" stroke-width="0.8" stroke-dasharray="1.6 1.7"/><line x1="659.7" y1="248.94" x2="1010.0" y2="248.94" stroke="#9a9a9a" stroke-width="0.8" stroke-dasharray="1.6 1.7"/><line x1="659.7" y1="257.05" x2="1010.0" y2="257.05" stroke="#9a9a9a" stroke-width="0.8" stroke-dasharray="1.6 1.7"/><line x1="659.7" y1="265.16" x2="1010.0" y2="265.16" stroke="#9a9a9a" stroke-width="0.8" stroke-dasharray="1.6 1.7"/><line x1="659.7" y1="273.27" x2="1010.0" y2="273.27" stroke="#9a9a9a" stroke-width="0.8" stroke-dasharray="1.6 1.7"/><line x1="659.7" y1="281.38" x2="1010.0" y2="281.38" stroke="#9a9a9a" stroke-width="0.8" stroke-dasharray="1.6 1.7"/><line x1="659.7" y1="289.49" x2="1010.0" y2="289.49" stroke="#9a9a9a" stroke-width="0.8" stroke-dasharray="1.6 1.7"/><line x1="659.7" y1="297.60" x2="1010.0" y2="297.60" stroke="#9a9a9a" stroke-width="0.8" stroke-dasharray="1.6 1.7"/><line x1="659.7" y1="305.71" x2="1010.0" y2="305.71" stroke="#9a9a9a" stroke-width="0.8" stroke-dasharray="1.6 1.7"/><line x1="659.7" y1="313.82" x2="1010.0" y2="313.82" stroke="#9a9a9a" stroke-width="0.8" stroke-dasharray="1.6 1.7"/><line x1="659.7" y1="321.93" x2="1010.0" y2="321.93" stroke="#9a9a9a" stroke-width="0.8" stroke-dasharray="1.6 1.7"/><line x1="659.7" y1="330.04" x2="1010.0" y2="330.04" stroke="#9a9a9a" stroke-width="0.8" stroke-dasharray="1.6 1.7"/><line x1="659.7" y1="338.15" x2="1010.0" y2="338.15" stroke="#9a9a9a" stroke-width="0.8" stroke-dasharray="1.6 1.7"/><line x1="659.7" y1="346.26" x2="1010.0" y2="346.26" stroke="#9a9a9a" stroke-width="0.8" stroke-dasharray="1.6 1.7"/><line x1="659.7" y1="354.37" x2="1010.0" y2="354.37" stroke="#9a9a9a" stroke-width="0.8" stroke-dasharray="1.6 1.7"/><line x1="659.7" y1="362.48" x2="1010.0" y2="362.48" stroke="#9a9a9a" stroke-width="0.8" stroke-dasharray="1.6 1.7"/><line x1="659.7" y1="370.59" x2="1010.0" y2="370.59" stroke="#9a9a9a" stroke-width="0.8" stroke-dasharray="1.6 1.7"/><line x1="659.7" y1="378.70" x2="1010.0" y2="378.70" stroke="#9a9a9a" stroke-width="0.8" stroke-dasharray="1.6 1.7"/><line x1="659.7" y1="386.81" x2="1010.0" y2="386.81" stroke="#9a9a9a" stroke-width="0.8" stroke-dasharray="1.6 1.7"/><line x1="659.7" y1="394.92" x2="1010.0" y2="394.92" stroke="#9a9a9a" stroke-width="0.8" stroke-dasharray="1.6 1.7"/><line x1="659.7" y1="403.03" x2="1010.0" y2="403.03" stroke="#9a9a9a" stroke-width="0.8" stroke-dasharray="1.6 1.7"/><line x1="659.7" y1="411.14" x2="1010.0" y2="411.14" stroke="#9a9a9a" stroke-width="0.8" stroke-dasharray="1.6 1.7"/><line x1="659.7" y1="419.25" x2="1010.0" y2="419.25" stroke="#9a9a9a" stroke-width="0.8" stroke-dasharray="1.6 1.7"/><line x1="659.7" y1="427.36" x2="1010.0" y2="427.36" stroke="#9a9a9a" stroke-width="0.8" stroke-dasharray="1.6 1.7"/><line x1="659.7" y1="435.47" x2="1010.0" y2="435.47" stroke="#9a9a9a" stroke-width="0.8" stroke-dasharray="1.6 1.7"/><line x1="659.7" y1="443.58" x2="1010.0" y2="443.58" stroke="#9a9a9a" stroke-width="0.8" stroke-dasharray="1.6 1.7"/><line x1="659.7" y1="451.69" x2="1010.0" y2="451.69" stroke="#9a9a9a" stroke-width="0.8" stroke-dasharray="1.6 1.7"/><line x1="659.7" y1="459.80" x2="1010.0" y2="459.80" stroke="#9a9a9a" stroke-width="0.8" stroke-dasharray="1.6 1.7"/><line x1="659.7" y1="467.91" x2="1010.0" y2="467.91" stroke="#9a9a9a" stroke-width="0.8" stroke-dasharray="1.6 1.7"/><line x1="659.7" y1="132.2" x2="1010.0" y2="132.2" stroke="#8a8a8a" stroke-width="1"/><line x1="1010.0" y1="132.2" x2="1010.0" y2="474.2" stroke="#505050" stroke-width="0.9"/><line x1="656.8" y1="135.40" x2="659.7" y2="135.40" stroke="#606060" stroke-width="0.7"/><line x1="656.8" y1="143.51" x2="659.7" y2="143.51" stroke="#606060" stroke-width="0.7"/><line x1="656.8" y1="151.62" x2="659.7" y2="151.62" stroke="#606060" stroke-width="0.7"/><line x1="656.8" y1="159.73" x2="659.7" y2="159.73" stroke="#606060" stroke-width="0.7"/><line x1="656.8" y1="167.84" x2="659.7" y2="167.84" stroke="#606060" stroke-width="0.7"/><line x1="656.8" y1="175.95" x2="659.7" y2="175.95" stroke="#606060" stroke-width="0.7"/><line x1="656.8" y1="184.06" x2="659.7" y2="184.06" stroke="#606060" stroke-width="0.7"/><line x1="656.8" y1="192.17" x2="659.7" y2="192.17" stroke="#606060" stroke-width="0.7"/><line x1="656.8" y1="200.28" x2="659.7" y2="200.28" stroke="#606060" stroke-width="0.7"/><line x1="656.8" y1="208.39" x2="659.7" y2="208.39" stroke="#606060" stroke-width="0.7"/><line x1="656.8" y1="216.50" x2="659.7" y2="216.50" stroke="#606060" stroke-width="0.7"/><line x1="656.8" y1="224.61" x2="659.7" y2="224.61" stroke="#606060" stroke-width="0.7"/><line x1="656.8" y1="232.72" x2="659.7" y2="232.72" stroke="#606060" stroke-width="0.7"/><line x1="656.8" y1="240.83" x2="659.7" y2="240.83" stroke="#606060" stroke-width="0.7"/><line x1="656.8" y1="248.94" x2="659.7" y2="248.94" stroke="#606060" stroke-width="0.7"/><line x1="656.8" y1="257.05" x2="659.7" y2="257.05" stroke="#606060" stroke-width="0.7"/><line x1="656.8" y1="265.16" x2="659.7" y2="265.16" stroke="#606060" stroke-width="0.7"/><line x1="656.8" y1="273.27" x2="659.7" y2="273.27" stroke="#606060" stroke-width="0.7"/><line x1="656.8" y1="281.38" x2="659.7" y2="281.38" stroke="#606060" stroke-width="0.7"/><line x1="656.8" y1="289.49" x2="659.7" y2="289.49" stroke="#606060" stroke-width="0.7"/><line x1="656.8" y1="297.60" x2="659.7" y2="297.60" stroke="#606060" stroke-width="0.7"/><line x1="656.8" y1="305.71" x2="659.7" y2="305.71" stroke="#606060" stroke-width="0.7"/><line x1="656.8" y1="313.82" x2="659.7" y2="313.82" stroke="#606060" stroke-width="0.7"/><line x1="656.8" y1="321.93" x2="659.7" y2="321.93" stroke="#606060" stroke-width="0.7"/><line x1="656.8" y1="330.04" x2="659.7" y2="330.04" stroke="#606060" stroke-width="0.7"/><line x1="656.8" y1="338.15" x2="659.7" y2="338.15" stroke="#606060" stroke-width="0.7"/><line x1="656.8" y1="346.26" x2="659.7" y2="346.26" stroke="#606060" stroke-width="0.7"/><line x1="656.8" y1="354.37" x2="659.7" y2="354.37" stroke="#606060" stroke-width="0.7"/><line x1="656.8" y1="362.48" x2="659.7" y2="362.48" stroke="#606060" stroke-width="0.7"/><line x1="656.8" y1="370.59" x2="659.7" y2="370.59" stroke="#606060" stroke-width="0.7"/><line x1="656.8" y1="378.70" x2="659.7" y2="378.70" stroke="#606060" stroke-width="0.7"/><line x1="656.8" y1="386.81" x2="659.7" y2="386.81" stroke="#606060" stroke-width="0.7"/><line x1="656.8" y1="394.92" x2="659.7" y2="394.92" stroke="#606060" stroke-width="0.7"/><line x1="656.8" y1="403.03" x2="659.7" y2="403.03" stroke="#606060" stroke-width="0.7"/><line x1="656.8" y1="411.14" x2="659.7" y2="411.14" stroke="#606060" stroke-width="0.7"/><line x1="656.8" y1="419.25" x2="659.7" y2="419.25" stroke="#606060" stroke-width="0.7"/><line x1="656.8" y1="427.36" x2="659.7" y2="427.36" stroke="#606060" stroke-width="0.7"/><line x1="656.8" y1="435.47" x2="659.7" y2="435.47" stroke="#606060" stroke-width="0.7"/><line x1="656.8" y1="443.58" x2="659.7" y2="443.58" stroke="#606060" stroke-width="0.7"/><line x1="656.8" y1="451.69" x2="659.7" y2="451.69" stroke="#606060" stroke-width="0.7"/><line x1="656.8" y1="459.80" x2="659.7" y2="459.80" stroke="#606060" stroke-width="0.7"/><line x1="656.8" y1="467.91" x2="659.7" y2="467.91" stroke="#606060" stroke-width="0.7"/><line x1="665.60" y1="474.2" x2="665.60" y2="476.4" stroke="#606060" stroke-width="0.7"/><line x1="698.76" y1="474.2" x2="698.76" y2="476.4" stroke="#606060" stroke-width="0.7"/><line x1="731.92" y1="474.2" x2="731.92" y2="476.4" stroke="#606060" stroke-width="0.7"/><line x1="765.08" y1="474.2" x2="765.08" y2="476.4" stroke="#606060" stroke-width="0.7"/><line x1="798.24" y1="474.2" x2="798.24" y2="476.4" stroke="#606060" stroke-width="0.7"/><line x1="831.40" y1="474.2" x2="831.40" y2="476.4" stroke="#606060" stroke-width="0.7"/><line x1="864.56" y1="474.2" x2="864.56" y2="476.4" stroke="#606060" stroke-width="0.7"/><line x1="897.72" y1="474.2" x2="897.72" y2="476.4" stroke="#606060" stroke-width="0.7"/><line x1="930.88" y1="474.2" x2="930.88" y2="476.4" stroke="#606060" stroke-width="0.7"/><line x1="964.04" y1="474.2" x2="964.04" y2="476.4" stroke="#606060" stroke-width="0.7"/><line x1="997.20" y1="474.2" x2="997.20" y2="476.4" stroke="#606060" stroke-width="0.7"/><line x1="665.60" y1="474.2" x2="665.60" y2="475.7" stroke="#707070" stroke-width="0.6"/><line x1="673.89" y1="474.2" x2="673.89" y2="475.7" stroke="#707070" stroke-width="0.6"/><line x1="682.18" y1="474.2" x2="682.18" y2="475.7" stroke="#707070" stroke-width="0.6"/><line x1="690.47" y1="474.2" x2="690.47" y2="475.7" stroke="#707070" stroke-width="0.6"/><line x1="698.76" y1="474.2" x2="698.76" y2="475.7" stroke="#707070" stroke-width="0.6"/><line x1="707.05" y1="474.2" x2="707.05" y2="475.7" stroke="#707070" stroke-width="0.6"/><line x1="715.34" y1="474.2" x2="715.34" y2="475.7" stroke="#707070" stroke-width="0.6"/><line x1="723.63" y1="474.2" x2="723.63" y2="475.7" stroke="#707070" stroke-width="0.6"/><line x1="731.92" y1="474.2" x2="731.92" y2="475.7" stroke="#707070" stroke-width="0.6"/><line x1="740.21" y1="474.2" x2="740.21" y2="475.7" stroke="#707070" stroke-width="0.6"/><line x1="748.50" y1="474.2" x2="748.50" y2="475.7" stroke="#707070" stroke-width="0.6"/><line x1="756.79" y1="474.2" x2="756.79" y2="475.7" stroke="#707070" stroke-width="0.6"/><line x1="765.08" y1="474.2" x2="765.08" y2="475.7" stroke="#707070" stroke-width="0.6"/><line x1="773.37" y1="474.2" x2="773.37" y2="475.7" stroke="#707070" stroke-width="0.6"/><line x1="781.66" y1="474.2" x2="781.66" y2="475.7" stroke="#707070" stroke-width="0.6"/><line x1="789.95" y1="474.2" x2="789.95" y2="475.7" stroke="#707070" stroke-width="0.6"/><line x1="798.24" y1="474.2" x2="798.24" y2="475.7" stroke="#707070" stroke-width="0.6"/><line x1="806.53" y1="474.2" x2="806.53" y2="475.7" stroke="#707070" stroke-width="0.6"/><line x1="814.82" y1="474.2" x2="814.82" y2="475.7" stroke="#707070" stroke-width="0.6"/><line x1="823.11" y1="474.2" x2="823.11" y2="475.7" stroke="#707070" stroke-width="0.6"/><line x1="831.40" y1="474.2" x2="831.40" y2="475.7" stroke="#707070" stroke-width="0.6"/><line x1="839.69" y1="474.2" x2="839.69" y2="475.7" stroke="#707070" stroke-width="0.6"/><line x1="847.98" y1="474.2" x2="847.98" y2="475.7" stroke="#707070" stroke-width="0.6"/><line x1="856.27" y1="474.2" x2="856.27" y2="475.7" stroke="#707070" stroke-width="0.6"/><line x1="864.56" y1="474.2" x2="864.56" y2="475.7" stroke="#707070" stroke-width="0.6"/><line x1="872.85" y1="474.2" x2="872.85" y2="475.7" stroke="#707070" stroke-width="0.6"/><line x1="881.14" y1="474.2" x2="881.14" y2="475.7" stroke="#707070" stroke-width="0.6"/><line x1="889.43" y1="474.2" x2="889.43" y2="475.7" stroke="#707070" stroke-width="0.6"/><line x1="897.72" y1="474.2" x2="897.72" y2="475.7" stroke="#707070" stroke-width="0.6"/><line x1="906.01" y1="474.2" x2="906.01" y2="475.7" stroke="#707070" stroke-width="0.6"/><line x1="914.30" y1="474.2" x2="914.30" y2="475.7" stroke="#707070" stroke-width="0.6"/><line x1="922.59" y1="474.2" x2="922.59" y2="475.7" stroke="#707070" stroke-width="0.6"/><line x1="930.88" y1="474.2" x2="930.88" y2="475.7" stroke="#707070" stroke-width="0.6"/><line x1="939.17" y1="474.2" x2="939.17" y2="475.7" stroke="#707070" stroke-width="0.6"/><line x1="947.46" y1="474.2" x2="947.46" y2="475.7" stroke="#707070" stroke-width="0.6"/><line x1="955.75" y1="474.2" x2="955.75" y2="475.7" stroke="#707070" stroke-width="0.6"/><line x1="964.04" y1="474.2" x2="964.04" y2="475.7" stroke="#707070" stroke-width="0.6"/><line x1="972.33" y1="474.2" x2="972.33" y2="475.7" stroke="#707070" stroke-width="0.6"/><line x1="980.62" y1="474.2" x2="980.62" y2="475.7" stroke="#707070" stroke-width="0.6"/><line x1="988.91" y1="474.2" x2="988.91" y2="475.7" stroke="#707070" stroke-width="0.6"/><line x1="997.20" y1="474.2" x2="997.20" y2="475.7" stroke="#707070" stroke-width="0.6"/><line x1="1005.49" y1="474.2" x2="1005.49" y2="475.7" stroke="#707070" stroke-width="0.6"/><line x1="659.7" y1="132.2" x2="659.7" y2="474.2" stroke="#000" stroke-width="1.5"/><line x1="659.7" y1="474.2" x2="1010.5" y2="474.2" stroke="#000" stroke-width="1.5"/><text x="649.7" y="137.7" font-size="6.3" fill="#303030" stroke="#303030" stroke-width="0.15" text-anchor="start" textLength="6.1" lengthAdjust="spacingAndGlyphs">70</text><text x="649.7" y="145.81" font-size="6.3" fill="#303030" stroke="#303030" stroke-width="0.15" text-anchor="start" textLength="6.1" lengthAdjust="spacingAndGlyphs">65</text><text x="649.7" y="153.92" font-size="6.3" fill="#303030" stroke="#303030" stroke-width="0.15" text-anchor="start" textLength="6.1" lengthAdjust="spacingAndGlyphs">60</text><text x="649.7" y="162.03" font-size="6.3" fill="#303030" stroke="#303030" stroke-width="0.15" text-anchor="start" textLength="6.1" lengthAdjust="spacingAndGlyphs">55</text><text x="649.7" y="170.14" font-size="6.3" fill="#303030" stroke="#303030" stroke-width="0.15" text-anchor="start" textLength="6.1" lengthAdjust="spacingAndGlyphs">50</text><text x="649.7" y="178.25" font-size="6.3" fill="#303030" stroke="#303030" stroke-width="0.15" text-anchor="start" textLength="6.1" lengthAdjust="spacingAndGlyphs">45</text><text x="649.7" y="186.36" font-size="6.3" fill="#303030" stroke="#303030" stroke-width="0.15" text-anchor="start" textLength="6.1" lengthAdjust="spacingAndGlyphs">40</text><text x="649.7" y="194.47" font-size="6.3" fill="#303030" stroke="#303030" stroke-width="0.15" text-anchor="start" textLength="6.1" lengthAdjust="spacingAndGlyphs">35</text><text x="649.7" y="202.58" font-size="6.3" fill="#303030" stroke="#303030" stroke-width="0.15" text-anchor="start" textLength="6.1" lengthAdjust="spacingAndGlyphs">30</text><text x="649.7" y="210.69" font-size="6.3" fill="#303030" stroke="#303030" stroke-width="0.15" text-anchor="start" textLength="6.1" lengthAdjust="spacingAndGlyphs">25</text><text x="649.7" y="218.8" font-size="6.3" fill="#303030" stroke="#303030" stroke-width="0.15" text-anchor="start" textLength="6.1" lengthAdjust="spacingAndGlyphs">20</text><text x="649.7" y="226.91" font-size="6.3" fill="#303030" stroke="#303030" stroke-width="0.15" text-anchor="start" textLength="6.1" lengthAdjust="spacingAndGlyphs">15</text><text x="649.7" y="235.02" font-size="6.3" fill="#303030" stroke="#303030" stroke-width="0.15" text-anchor="start" textLength="6.1" lengthAdjust="spacingAndGlyphs">10</text><text x="652.75" y="243.13" font-size="6.3" fill="#303030" stroke="#303030" stroke-width="0.15" text-anchor="start" textLength="3.05" lengthAdjust="spacingAndGlyphs">5</text><text x="652.75" y="251.24" font-size="6.3" fill="#303030" stroke="#303030" stroke-width="0.15" text-anchor="start" textLength="3.05" lengthAdjust="spacingAndGlyphs">0</text><text x="649.35" y="259.35" font-size="6.3" fill="#303030" stroke="#303030" stroke-width="0.15" text-anchor="start" textLength="6.449999999999999" lengthAdjust="spacingAndGlyphs">&#8722;5</text><text x="646.3" y="267.46" font-size="6.3" fill="#303030" stroke="#303030" stroke-width="0.15" text-anchor="start" textLength="9.5" lengthAdjust="spacingAndGlyphs">&#8722;10</text><text x="646.3" y="275.57" font-size="6.3" fill="#303030" stroke="#303030" stroke-width="0.15" text-anchor="start" textLength="9.5" lengthAdjust="spacingAndGlyphs">&#8722;15</text><text x="646.3" y="283.68" font-size="6.3" fill="#303030" stroke="#303030" stroke-width="0.15" text-anchor="start" textLength="9.5" lengthAdjust="spacingAndGlyphs">&#8722;20</text><text x="646.3" y="291.79" font-size="6.3" fill="#303030" stroke="#303030" stroke-width="0.15" text-anchor="start" textLength="9.5" lengthAdjust="spacingAndGlyphs">&#8722;25</text><text x="646.3" y="299.9" font-size="6.3" fill="#303030" stroke="#303030" stroke-width="0.15" text-anchor="start" textLength="9.5" lengthAdjust="spacingAndGlyphs">&#8722;30</text><text x="646.3" y="308.01" font-size="6.3" fill="#303030" stroke="#303030" stroke-width="0.15" text-anchor="start" textLength="9.5" lengthAdjust="spacingAndGlyphs">&#8722;35</text><text x="646.3" y="316.12" font-size="6.3" fill="#303030" stroke="#303030" stroke-width="0.15" text-anchor="start" textLength="9.5" lengthAdjust="spacingAndGlyphs">&#8722;40</text><text x="646.3" y="324.23" font-size="6.3" fill="#303030" stroke="#303030" stroke-width="0.15" text-anchor="start" textLength="9.5" lengthAdjust="spacingAndGlyphs">&#8722;45</text><text x="646.3" y="332.34" font-size="6.3" fill="#303030" stroke="#303030" stroke-width="0.15" text-anchor="start" textLength="9.5" lengthAdjust="spacingAndGlyphs">&#8722;50</text><text x="646.3" y="340.45" font-size="6.3" fill="#303030" stroke="#303030" stroke-width="0.15" text-anchor="start" textLength="9.5" lengthAdjust="spacingAndGlyphs">&#8722;55</text><text x="646.3" y="348.56" font-size="6.3" fill="#303030" stroke="#303030" stroke-width="0.15" text-anchor="start" textLength="9.5" lengthAdjust="spacingAndGlyphs">&#8722;60</text><text x="646.3" y="356.67" font-size="6.3" fill="#303030" stroke="#303030" stroke-width="0.15" text-anchor="start" textLength="9.5" lengthAdjust="spacingAndGlyphs">&#8722;65</text><text x="646.3" y="364.78" font-size="6.3" fill="#303030" stroke="#303030" stroke-width="0.15" text-anchor="start" textLength="9.5" lengthAdjust="spacingAndGlyphs">&#8722;70</text><text x="646.3" y="372.89" font-size="6.3" fill="#303030" stroke="#303030" stroke-width="0.15" text-anchor="start" textLength="9.5" lengthAdjust="spacingAndGlyphs">&#8722;75</text><text x="646.3" y="381.0" font-size="6.3" fill="#303030" stroke="#303030" stroke-width="0.15" text-anchor="start" textLength="9.5" lengthAdjust="spacingAndGlyphs">&#8722;80</text><text x="646.3" y="389.11" font-size="6.3" fill="#303030" stroke="#303030" stroke-width="0.15" text-anchor="start" textLength="9.5" lengthAdjust="spacingAndGlyphs">&#8722;85</text><text x="646.3" y="397.22" font-size="6.3" fill="#303030" stroke="#303030" stroke-width="0.15" text-anchor="start" textLength="9.5" lengthAdjust="spacingAndGlyphs">&#8722;90</text><text x="646.3" y="405.33" font-size="6.3" fill="#303030" stroke="#303030" stroke-width="0.15" text-anchor="start" textLength="9.5" lengthAdjust="spacingAndGlyphs">&#8722;95</text><text x="643.25" y="413.44" font-size="6.3" fill="#303030" stroke="#303030" stroke-width="0.15" text-anchor="start" textLength="12.549999999999999" lengthAdjust="spacingAndGlyphs">&#8722;100</text><text x="643.25" y="421.55" font-size="6.3" fill="#303030" stroke="#303030" stroke-width="0.15" text-anchor="start" textLength="12.549999999999999" lengthAdjust="spacingAndGlyphs">&#8722;105</text><text x="643.25" y="429.66" font-size="6.3" fill="#303030" stroke="#303030" stroke-width="0.15" text-anchor="start" textLength="12.549999999999999" lengthAdjust="spacingAndGlyphs">&#8722;110</text><text x="643.25" y="437.77" font-size="6.3" fill="#303030" stroke="#303030" stroke-width="0.15" text-anchor="start" textLength="12.549999999999999" lengthAdjust="spacingAndGlyphs">&#8722;115</text><text x="643.25" y="445.88" font-size="6.3" fill="#303030" stroke="#303030" stroke-width="0.15" text-anchor="start" textLength="12.549999999999999" lengthAdjust="spacingAndGlyphs">&#8722;120</text><text x="643.25" y="453.99" font-size="6.3" fill="#303030" stroke="#303030" stroke-width="0.15" text-anchor="start" textLength="12.549999999999999" lengthAdjust="spacingAndGlyphs">&#8722;125</text><text x="643.25" y="462.1" font-size="6.3" fill="#303030" stroke="#303030" stroke-width="0.15" text-anchor="start" textLength="12.549999999999999" lengthAdjust="spacingAndGlyphs">&#8722;130</text><text x="643.25" y="470.21" font-size="6.3" fill="#303030" stroke="#303030" stroke-width="0.15" text-anchor="start" textLength="12.549999999999999" lengthAdjust="spacingAndGlyphs">&#8722;135</text><text x="659.65" y="484.0" font-size="6.3" fill="#303030" stroke="#303030" stroke-width="0.15" text-anchor="start" textLength="9.5" lengthAdjust="spacingAndGlyphs">&#8722;80</text><text x="692.81" y="484.0" font-size="6.3" fill="#303030" stroke="#303030" stroke-width="0.15" text-anchor="start" textLength="9.5" lengthAdjust="spacingAndGlyphs">&#8722;60</text><text x="725.97" y="484.0" font-size="6.3" fill="#303030" stroke="#303030" stroke-width="0.15" text-anchor="start" textLength="9.5" lengthAdjust="spacingAndGlyphs">&#8722;40</text><text x="759.13" y="484.0" font-size="6.3" fill="#303030" stroke="#303030" stroke-width="0.15" text-anchor="start" textLength="9.5" lengthAdjust="spacingAndGlyphs">&#8722;20</text><text x="796.72" y="484.0" font-size="6.3" fill="#303030" stroke="#303030" stroke-width="0.15" text-anchor="start" textLength="3.05" lengthAdjust="spacingAndGlyphs">0</text><text x="828.35" y="484.0" font-size="6.3" fill="#303030" stroke="#303030" stroke-width="0.15" text-anchor="start" textLength="6.1" lengthAdjust="spacingAndGlyphs">20</text><text x="861.51" y="484.0" font-size="6.3" fill="#303030" stroke="#303030" stroke-width="0.15" text-anchor="start" textLength="6.1" lengthAdjust="spacingAndGlyphs">40</text><text x="894.67" y="484.0" font-size="6.3" fill="#303030" stroke="#303030" stroke-width="0.15" text-anchor="start" textLength="6.1" lengthAdjust="spacingAndGlyphs">60</text><text x="927.83" y="484.0" font-size="6.3" fill="#303030" stroke="#303030" stroke-width="0.15" text-anchor="start" textLength="6.1" lengthAdjust="spacingAndGlyphs">80</text><text x="959.46" y="484.0" font-size="6.3" fill="#303030" stroke="#303030" stroke-width="0.15" text-anchor="start" textLength="9.149999999999999" lengthAdjust="spacingAndGlyphs">100</text><text x="992.62" y="484.0" font-size="6.3" fill="#303030" stroke="#303030" stroke-width="0.15" text-anchor="start" textLength="9.149999999999999" lengthAdjust="spacingAndGlyphs">120</text><path d="M740.6,414.8 C740.4,412.8 739.4,407.1 739.5,403.0 C739.6,398.9 740.4,394.2 741.2,390.0 C742.0,385.8 742.7,383.7 744.1,377.9 C745.5,372.1 747.6,361.9 749.4,355.0 C751.1,348.1 752.7,343.4 754.6,336.2 C756.5,329.0 758.6,320.2 760.8,311.6 C763.0,303.0 765.8,291.6 767.8,284.3 C769.8,277.0 771.5,273.3 773.1,267.6 C774.7,261.9 776.3,255.2 777.5,250.0 C778.7,244.8 778.9,241.5 780.1,236.3 C781.3,231.1 783.0,224.6 784.5,219.0 C786.0,213.4 787.6,208.8 789.1,202.7 C790.6,196.6 791.7,188.5 793.6,182.5 C795.5,176.5 797.3,171.6 800.3,166.9 C803.3,162.2 807.0,158.2 811.5,154.6 C816.0,151.0 820.9,147.8 827.2,145.6 C833.5,143.4 842.8,141.7 849.5,141.5 C856.2,141.3 862.2,142.6 867.5,144.2 C872.8,145.8 876.9,148.1 881.2,151.1 C885.5,154.1 890.0,158.3 893.5,162.1 C897.0,165.9 899.7,169.8 902.0,174.0 C904.3,178.2 906.1,182.2 907.5,187.0 C908.9,191.8 909.3,197.5 910.2,203.0 C911.1,208.5 911.6,211.3 913.0,220.0 C914.4,228.7 916.9,245.6 918.5,255.0 C920.1,264.4 921.1,269.0 922.7,276.4 C924.3,283.8 926.7,292.6 928.0,299.3 C929.3,306.1 930.2,311.9 930.6,316.9 C931.0,321.8 931.0,325.1 930.1,329.0 C929.2,332.9 927.9,336.0 925.2,340.1 C922.5,344.2 918.5,348.0 914.0,353.6 C909.5,359.2 903.6,367.0 898.4,373.7 C893.2,380.4 888.3,386.8 882.7,393.9 C877.1,401.0 870.0,409.6 864.8,416.3 C859.6,423.0 855.4,429.0 851.3,434.2 C847.2,439.4 843.8,444.1 840.1,447.6 C836.4,451.1 833.3,453.2 829.0,455.4 C824.7,457.6 819.9,459.5 814.5,460.6 C809.1,461.8 803.4,462.5 796.9,462.3 C790.4,462.1 782.0,461.8 775.8,459.7 C769.6,457.6 764.6,454.2 759.9,450.0 C755.2,445.8 750.8,440.1 747.6,434.2 C744.4,428.3 741.8,418.0 740.6,414.8" fill="none" stroke="#202020" stroke-width="0.9"/><path d="M768.7,283.4 C769.3,283.0 770.3,281.8 772.2,280.8 C774.1,279.9 777.3,278.6 780.1,277.7 C782.9,276.8 786.9,276.1 789.1,275.4 C791.4,274.6 792.3,274.9 793.6,273.2 C794.9,271.5 795.8,269.3 796.9,265.4 C798.0,261.5 798.8,255.6 800.0,250.0 C801.2,244.4 803.0,237.8 804.3,232.0 C805.6,226.2 806.7,220.7 808.0,215.0 C809.3,209.3 810.8,203.2 812.0,198.0 C813.2,192.8 814.3,187.7 815.5,184.0 C816.7,180.3 817.2,178.7 819.3,175.8 C821.4,172.9 825.0,168.7 828.0,166.5 C831.0,164.3 833.8,163.7 837.4,162.8 C841.0,161.9 845.4,161.1 849.5,161.3 C853.6,161.5 857.6,162.2 862.0,163.8 C866.4,165.5 872.1,168.2 875.7,171.2 C879.4,174.2 881.8,177.9 883.9,182.0 C886.0,186.1 887.5,191.0 888.6,196.0 C889.7,201.0 889.5,205.7 890.4,211.9 C891.3,218.1 892.9,226.7 893.9,233.0 C894.9,239.3 895.0,241.3 896.3,250.0 C897.6,258.7 900.0,273.5 901.6,285.2 C903.2,296.9 905.8,313.1 906.0,320.4 C906.2,327.7 905.6,324.3 902.8,329.0 C900.0,333.7 894.9,340.7 889.3,348.5 C883.7,356.3 875.6,367.3 869.3,376.0 C863.0,384.7 856.9,392.8 851.3,400.6 C845.7,408.4 839.8,417.8 835.7,423.0 C831.6,428.2 830.2,429.1 826.7,431.9 C823.2,434.6 818.5,437.7 815.0,439.5 C811.5,441.3 809.6,442.1 805.7,442.6 C801.8,443.1 796.6,443.6 791.6,442.5 C786.6,441.4 780.2,439.0 775.8,435.9 C771.4,432.8 767.8,428.3 765.2,423.6 C762.6,418.9 760.9,413.1 760.3,407.8 C759.7,402.5 760.6,397.9 761.7,392.0 C762.8,386.1 765.5,378.8 767.0,372.6 C768.5,366.4 769.6,360.5 770.8,355.0 C772.0,349.5 772.6,345.5 774.0,339.7 C775.4,333.9 777.4,327.1 779.3,320.4 C781.2,313.7 783.5,306.8 785.4,299.3 C787.3,291.8 789.8,279.5 790.7,275.5" fill="none" stroke="#202020" stroke-width="0.9"/><path d="M751.1,381.4 C751.2,377.0 751.1,363.7 752.0,355.0 C752.9,346.3 754.8,337.0 756.4,329.2 C758.0,321.4 759.9,315.4 761.7,308.1 C763.5,300.8 765.4,291.9 767.0,285.2 C768.6,278.4 769.9,273.5 771.4,267.6 C772.9,261.7 774.5,255.2 776.1,250.0 C777.8,244.8 779.6,241.5 781.3,236.3 C782.9,231.1 784.5,224.2 786.0,219.0 C787.5,213.8 788.6,210.2 790.2,204.9 C791.8,199.6 793.4,192.2 795.8,187.0 C798.2,181.8 801.1,177.5 804.8,173.6 C808.5,169.7 813.4,166.1 818.2,163.5 C823.1,160.9 828.7,159.0 833.9,157.9 C839.1,156.8 844.3,156.5 849.5,156.7 C854.7,156.9 860.1,157.3 865.2,159.0 C870.3,160.7 875.1,163.1 880.0,166.9 C884.9,170.7 890.7,176.8 894.8,182.0 C898.9,187.2 901.7,191.7 904.5,197.8 C907.3,204.0 909.6,211.9 911.5,218.9 C913.4,225.9 914.8,234.0 915.9,240.0 C917.0,246.0 917.7,250.4 918.2,255.0 C918.7,259.6 918.8,262.6 918.8,267.6 C918.8,272.6 918.7,279.1 918.3,285.2 C917.9,291.3 917.6,298.7 916.5,304.5 C915.4,310.3 914.8,311.8 911.8,320.0 C908.8,328.2 903.2,343.9 898.4,353.6 C893.5,363.3 888.3,370.0 882.7,378.2 C877.1,386.4 870.8,395.0 864.8,402.8 C858.8,410.6 852.1,419.2 846.9,425.2 C841.7,431.2 837.9,435.1 833.4,438.6 C828.9,442.2 824.2,444.6 820.0,446.5 C815.8,448.4 811.6,449.3 808.0,449.8 C804.4,450.3 802.5,450.6 798.6,449.7 C794.7,448.8 789.2,447.3 784.5,444.7 C779.8,442.1 774.6,438.6 770.5,434.2 C766.4,429.8 762.8,424.2 759.9,418.3 C757.0,412.4 754.4,405.1 752.9,399.0 C751.4,392.9 751.4,384.3 751.1,381.4" fill="none" stroke="#c84444" stroke-width="0.85"/><path d="M855.8,406.5 L866.4,417.4 M857.6,417.4 L866.4,405.1" stroke="#505050" stroke-width="0.8"/><path d="M791.6,282.4 L793.9,284.7 L791.6,287 L789.3,284.7 Z" fill="#30b040"/></svg>
<div style="position:absolute;left:9.40px;top:3.67px;font-size:7.0px;line-height:7.0px;font-weight:400;color:#cfcfcf;white-space:nowrap;transform:scaleX(0.9073);transform-origin:0 0;">Racelogic - DriftBox Tools</div><div style="position:absolute;left:24.00px;top:28.53px;font-size:13.2px;line-height:13.2px;font-weight:700;color:#262626;white-space:nowrap;transform:scaleX(1.3953);transform-origin:0 0;font-style:italic;-webkit-text-stroke:0.35px #262626;">DriftBox</div><div style="position:absolute;left:106.00px;top:13.77px;font-size:7.0px;line-height:7.0px;font-weight:400;color:#202020;white-space:nowrap;transform:scaleX(0.8161);transform-origin:0 0;">Source Detail</div><div style="position:absolute;left:106.30px;top:25.32px;font-size:7.3px;line-height:7.3px;font-weight:700;color:#000;white-space:nowrap;transform:scaleX(0.8726);transform-origin:0 0;">Current File: PBOX_002.DBN</div><div style="position:absolute;left:106.30px;top:39.22px;font-size:7.3px;line-height:7.3px;font-weight:700;color:#000;white-space:nowrap;transform:scaleX(0.8938);transform-origin:0 0;">Run Time (secs): 173.50</div><div style="position:absolute;left:241.10px;top:16.47px;font-size:7.0px;line-height:7.0px;font-weight:400;color:#000;white-space:nowrap;transform:scaleX(0.8313);transform-origin:0 0;">Summary</div><div style="position:absolute;left:275.80px;top:16.47px;font-size:7.0px;line-height:7.0px;font-weight:400;color:#000;white-space:nowrap;transform:scaleX(0.8373);transform-origin:0 0;">Options</div><div style="position:absolute;left:303.70px;top:16.47px;font-size:7.0px;line-height:7.0px;font-weight:400;color:#000;white-space:nowrap;transform:scaleX(0.7913);transform-origin:0 0;">Help</div><div style="position:absolute;left:244.00px;top:42.67px;font-size:7.0px;line-height:7.0px;font-weight:400;color:#000;white-space:nowrap;transform:scaleX(0.8828);transform-origin:0 0;">Load All</div><div style="position:absolute;left:288.70px;top:42.67px;font-size:7.0px;line-height:7.0px;font-weight:400;color:#000;white-space:nowrap;transform:scaleX(0.8329);transform-origin:0 0;">Save</div><div style="position:absolute;left:322.70px;top:42.67px;font-size:7.0px;line-height:7.0px;font-weight:400;color:#000;white-space:nowrap;transform:scaleX(0.8116);transform-origin:0 0;">Graph</div><div style="position:absolute;left:345.90px;top:42.67px;font-size:7.0px;line-height:7.0px;font-weight:400;color:#000;white-space:nowrap;transform:scaleX(0.8750);transform-origin:0 0;">Tools</div><div style="position:absolute;left:2.00px;top:86.67px;font-size:7.0px;line-height:7.0px;font-weight:400;color:#a0a0a0;white-space:nowrap;transform:scaleX(0.8167);transform-origin:0 0;">Graph</div><div style="position:absolute;left:24.80px;top:93.27px;font-size:7.0px;line-height:7.0px;font-weight:400;color:#000;white-space:nowrap;transform:scaleX(0.8451);transform-origin:0 0;">Export</div><div style="position:absolute;left:48.90px;top:93.27px;font-size:7.0px;line-height:7.0px;font-weight:400;color:#000;white-space:nowrap;transform:scaleX(0.8577);transform-origin:0 0;">Edit Data</div><div style="position:absolute;left:80.60px;top:93.27px;font-size:7.0px;line-height:7.0px;font-weight:400;color:#000;white-space:nowrap;transform:scaleX(0.8395);transform-origin:0 0;">Remove Run</div><div style="position:absolute;left:121.20px;top:93.27px;font-size:7.0px;line-height:7.0px;font-weight:400;color:#000;white-space:nowrap;transform:scaleX(0.8755);transform-origin:0 0;">Graph Set-up</div><div style="position:absolute;left:164.80px;top:93.27px;font-size:7.0px;line-height:7.0px;font-weight:400;color:#000;white-space:nowrap;transform:scaleX(0.8677);transform-origin:0 0;">Print</div><div style="position:absolute;left:190.00px;top:93.27px;font-size:7.0px;line-height:7.0px;font-weight:400;color:#000;white-space:nowrap;transform:scaleX(0.8953);transform-origin:0 0;">G-circle</div><div style="position:absolute;left:221.30px;top:93.27px;font-size:7.0px;line-height:7.0px;font-weight:400;color:#000;white-space:nowrap;transform:scaleX(0.9374);transform-origin:0 0;">Start / Finish &amp; Splits</div><div style="position:absolute;left:288.90px;top:93.27px;font-size:7.0px;line-height:7.0px;font-weight:400;color:#000;white-space:nowrap;transform:scaleX(0.9295);transform-origin:0 0;">Set Start / Finish</div><div style="position:absolute;left:343.60px;top:93.27px;font-size:7.0px;line-height:7.0px;font-weight:400;color:#000;white-space:nowrap;transform:scaleX(0.8764);transform-origin:0 0;">Sectors</div><div style="position:absolute;left:388.00px;top:93.27px;font-size:7.0px;line-height:7.0px;font-weight:400;color:#000;white-space:nowrap;transform:scaleX(0.8577);transform-origin:0 0;">Drift Mode</div><div style="position:absolute;left:423.10px;top:93.27px;font-size:7.0px;line-height:7.0px;font-weight:400;color:#000;white-space:nowrap;transform:scaleX(0.8496);transform-origin:0 0;">Lap Timing</div><div style="position:absolute;left:465.10px;top:93.27px;font-size:7.0px;line-height:7.0px;font-weight:400;color:#000;white-space:nowrap;transform:scaleX(0.8970);transform-origin:0 0;">Accel results</div><div style="position:absolute;left:507.80px;top:93.27px;font-size:7.0px;line-height:7.0px;font-weight:400;color:#000;white-space:nowrap;transform:scaleX(0.8822);transform-origin:0 0;">Decel results</div><div style="position:absolute;left:553.70px;top:93.27px;font-size:7.0px;line-height:7.0px;font-weight:400;color:#000;white-space:nowrap;transform:scaleX(0.8258);transform-origin:0 0;">Replay</div><div style="position:absolute;left:584.00px;top:93.27px;font-size:7.0px;line-height:7.0px;font-weight:400;color:#000;white-space:nowrap;transform:scaleX(0.8806);transform-origin:0 0;">Clear Results</div><div style="position:absolute;left:628.20px;top:93.27px;font-size:7.0px;line-height:7.0px;font-weight:400;color:#000;white-space:nowrap;transform:scaleX(0.8697);transform-origin:0 0;">Export Results</div><div style="position:absolute;left:3.20px;top:108.37px;font-size:7.0px;line-height:7.0px;font-weight:400;color:#fff;white-space:nowrap;transform:scaleX(0.8218);transform-origin:0 0;">Graph</div><div style="position:absolute;left:629.80px;top:107.97px;font-size:7.0px;line-height:7.0px;font-weight:400;color:#c4c4c4;white-space:nowrap;transform:scaleX(0.8376);transform-origin:0 0;">Graph : Map</div><div style="position:absolute;left:3.40px;top:504.87px;font-size:7.0px;line-height:7.0px;font-weight:400;color:#c4c4c4;white-space:nowrap;transform:scaleX(0.8359);transform-origin:0 0;">Graph : Data</div><div style="position:absolute;left:380.00px;top:515.87px;font-size:7.0px;line-height:7.0px;font-weight:400;color:#d04040;white-space:nowrap;transform:scaleX(0.7787);transform-origin:0 0;">PBOX_002.DBN (Run 7)</div><div style="position:absolute;left:4.40px;top:527.07px;font-size:7.0px;line-height:7.0px;font-weight:400;color:#202020;white-space:nowrap;transform:scaleX(0.7808);transform-origin:0 0;">Run Time</div><div style="position:absolute;left:380.00px;top:527.07px;font-size:7.0px;line-height:7.0px;font-weight:400;color:#202020;white-space:nowrap;transform:scaleX(0.8079);transform-origin:0 0;">0 Minute 23.89 Seconds</div><div style="position:absolute;left:4.40px;top:538.27px;font-size:7.0px;line-height:7.0px;font-weight:400;color:#983838;white-space:nowrap;transform:scaleX(0.8263);transform-origin:0 0;">Cursor (metres)</div><div style="position:absolute;left:380.30px;top:539.24px;font-size:5.5px;line-height:5.5px;font-weight:400;color:#909090;white-space:nowrap;transform:scaleX(1.1599);transform-origin:0 0;">----</div><div style="position:absolute;left:14.60px;top:549.47px;font-size:7.0px;line-height:7.0px;font-weight:400;color:#d04848;white-space:nowrap;transform:scaleX(0.8137);transform-origin:0 0;">Speed (km/h)</div><div style="position:absolute;left:380.30px;top:550.44px;font-size:5.5px;line-height:5.5px;font-weight:400;color:#d04848;white-space:nowrap;transform:scaleX(1.1599);transform-origin:0 0;">----</div><div style="position:absolute;left:14.60px;top:560.67px;font-size:7.0px;line-height:7.0px;font-weight:400;color:#3c3c9c;white-space:nowrap;transform:scaleX(0.8280);transform-origin:0 0;">Lateral Acceleration (g)</div><div style="position:absolute;left:380.30px;top:561.64px;font-size:5.5px;line-height:5.5px;font-weight:400;color:#3c3c9c;white-space:nowrap;transform:scaleX(1.1599);transform-origin:0 0;">----</div><div style="position:absolute;left:14.60px;top:571.87px;font-size:7.0px;line-height:7.0px;font-weight:400;color:#b4b4b4;white-space:nowrap;transform:scaleX(0.8184);transform-origin:0 0;">Longitudinal Acceleration (g)</div><div style="position:absolute;left:380.30px;top:572.84px;font-size:5.5px;line-height:5.5px;font-weight:400;color:#c4c4c4;white-space:nowrap;transform:scaleX(1.1599);transform-origin:0 0;">----</div><div style="position:absolute;left:14.60px;top:583.07px;font-size:7.0px;line-height:7.0px;font-weight:400;color:#b4b4b4;white-space:nowrap;transform:scaleX(0.7945);transform-origin:0 0;">Heading (Degrees)</div><div style="position:absolute;left:380.30px;top:584.04px;font-size:5.5px;line-height:5.5px;font-weight:400;color:#c4c4c4;white-space:nowrap;transform:scaleX(1.1599);transform-origin:0 0;">----</div><div style="position:absolute;left:14.60px;top:594.27px;font-size:7.0px;line-height:7.0px;font-weight:400;color:#b4b4b4;white-space:nowrap;transform:scaleX(0.7878);transform-origin:0 0;">Height (metres)</div><div style="position:absolute;left:380.30px;top:595.24px;font-size:5.5px;line-height:5.5px;font-weight:400;color:#c4c4c4;white-space:nowrap;transform:scaleX(1.1599);transform-origin:0 0;">----</div><div style="position:absolute;left:14.60px;top:605.47px;font-size:7.0px;line-height:7.0px;font-weight:400;color:#b4b4b4;white-space:nowrap;transform:scaleX(0.8083);transform-origin:0 0;">Relative Height (metres)</div><div style="position:absolute;left:380.30px;top:606.44px;font-size:5.5px;line-height:5.5px;font-weight:400;color:#c4c4c4;white-space:nowrap;transform:scaleX(1.1599);transform-origin:0 0;">----</div><div style="position:absolute;left:14.60px;top:616.67px;font-size:7.0px;line-height:7.0px;font-weight:400;color:#b4b4b4;white-space:nowrap;transform:scaleX(0.8219);transform-origin:0 0;">Vertical Speed (km/h)</div><div style="position:absolute;left:380.30px;top:617.64px;font-size:5.5px;line-height:5.5px;font-weight:400;color:#c4c4c4;white-space:nowrap;transform:scaleX(1.1599);transform-origin:0 0;">----</div><div style="position:absolute;left:581.90px;top:504.47px;font-size:7.0px;line-height:7.0px;font-weight:400;color:#c4c4c4;white-space:nowrap;transform:scaleX(0.9024);transform-origin:0 0;">Report Generator - Circuit Test</div><div style="position:absolute;left:588.90px;top:524.37px;font-size:7.0px;line-height:7.0px;font-weight:400;color:#202020;white-space:nowrap;transform:scaleX(0.7815);transform-origin:0 0;">Run num</div><div style="position:absolute;left:629.25px;top:524.37px;font-size:7.0px;line-height:7.0px;font-weight:400;color:#202020;white-space:nowrap;transform:scaleX(0.7798);transform-origin:0 0;">Time(s)</div><div style="position:absolute;left:670.20px;top:524.37px;font-size:7.0px;line-height:7.0px;font-weight:400;color:#202020;white-space:nowrap;transform:scaleX(0.7651);transform-origin:0 0;">Vmax</div><div style="position:absolute;left:702.20px;top:524.37px;font-size:7.0px;line-height:7.0px;font-weight:400;color:#202020;white-space:nowrap;transform:scaleX(0.8182);transform-origin:0 0;">Graph run</div><div style="position:absolute;left:613.89px;top:542.57px;font-size:7.0px;line-height:7.0px;font-weight:400;color:#202020;white-space:nowrap;">1</div><div style="position:absolute;left:632.70px;top:542.57px;font-size:7.0px;line-height:7.0px;font-weight:400;color:#202020;white-space:nowrap;transform:scaleX(0.8587);transform-origin:0 0;">00:25.40</div><div style="position:absolute;left:680.00px;top:542.57px;font-size:7.0px;line-height:7.0px;font-weight:400;color:#202020;white-space:nowrap;transform:scaleX(0.8214);transform-origin:0 0;">81.16</div><div style="position:absolute;left:613.89px;top:553.32px;font-size:7.0px;line-height:7.0px;font-weight:400;color:#202020;white-space:nowrap;">2</div><div style="position:absolute;left:632.70px;top:553.32px;font-size:7.0px;line-height:7.0px;font-weight:400;color:#202020;white-space:nowrap;transform:scaleX(0.8587);transform-origin:0 0;">00:24.60</div><div style="position:absolute;left:680.00px;top:553.32px;font-size:7.0px;line-height:7.0px;font-weight:400;color:#202020;white-space:nowrap;transform:scaleX(0.8214);transform-origin:0 0;">91.24</div><div style="position:absolute;left:613.89px;top:564.07px;font-size:7.0px;line-height:7.0px;font-weight:400;color:#202020;white-space:nowrap;">3</div><div style="position:absolute;left:632.70px;top:564.07px;font-size:7.0px;line-height:7.0px;font-weight:400;color:#202020;white-space:nowrap;transform:scaleX(0.8587);transform-origin:0 0;">00:25.00</div><div style="position:absolute;left:680.00px;top:564.07px;font-size:7.0px;line-height:7.0px;font-weight:400;color:#202020;white-space:nowrap;transform:scaleX(0.8214);transform-origin:0 0;">85.64</div><div style="position:absolute;left:613.89px;top:574.82px;font-size:7.0px;line-height:7.0px;font-weight:400;color:#202020;white-space:nowrap;">4</div><div style="position:absolute;left:632.70px;top:574.82px;font-size:7.0px;line-height:7.0px;font-weight:400;color:#202020;white-space:nowrap;transform:scaleX(0.8587);transform-origin:0 0;">00:25.00</div><div style="position:absolute;left:680.00px;top:574.82px;font-size:7.0px;line-height:7.0px;font-weight:400;color:#202020;white-space:nowrap;transform:scaleX(0.8214);transform-origin:0 0;">87.69</div><div style="position:absolute;left:613.89px;top:585.57px;font-size:7.0px;line-height:7.0px;font-weight:400;color:#202020;white-space:nowrap;">5</div><div style="position:absolute;left:632.70px;top:585.57px;font-size:7.0px;line-height:7.0px;font-weight:400;color:#202020;white-space:nowrap;transform:scaleX(0.8587);transform-origin:0 0;">00:24.60</div><div style="position:absolute;left:680.00px;top:585.57px;font-size:7.0px;line-height:7.0px;font-weight:400;color:#202020;white-space:nowrap;transform:scaleX(0.8214);transform-origin:0 0;">89.80</div><div style="position:absolute;left:613.89px;top:596.32px;font-size:7.0px;line-height:7.0px;font-weight:400;color:#202020;white-space:nowrap;">6</div><div style="position:absolute;left:632.70px;top:596.32px;font-size:7.0px;line-height:7.0px;font-weight:400;color:#202020;white-space:nowrap;transform:scaleX(0.8587);transform-origin:0 0;">00:24.30</div><div style="position:absolute;left:680.00px;top:596.32px;font-size:7.0px;line-height:7.0px;font-weight:400;color:#202020;white-space:nowrap;transform:scaleX(0.8214);transform-origin:0 0;">90.81</div><div style="position:absolute;left:613.89px;top:607.07px;font-size:7.0px;line-height:7.0px;font-weight:400;color:#202020;white-space:nowrap;">7</div><div style="position:absolute;left:632.70px;top:607.07px;font-size:7.0px;line-height:7.0px;font-weight:400;color:#202020;white-space:nowrap;transform:scaleX(0.8587);transform-origin:0 0;">00:23.90</div><div style="position:absolute;left:680.00px;top:607.07px;font-size:7.0px;line-height:7.0px;font-weight:400;color:#202020;white-space:nowrap;transform:scaleX(0.8214);transform-origin:0 0;">93.33</div>
</div></body></html>
